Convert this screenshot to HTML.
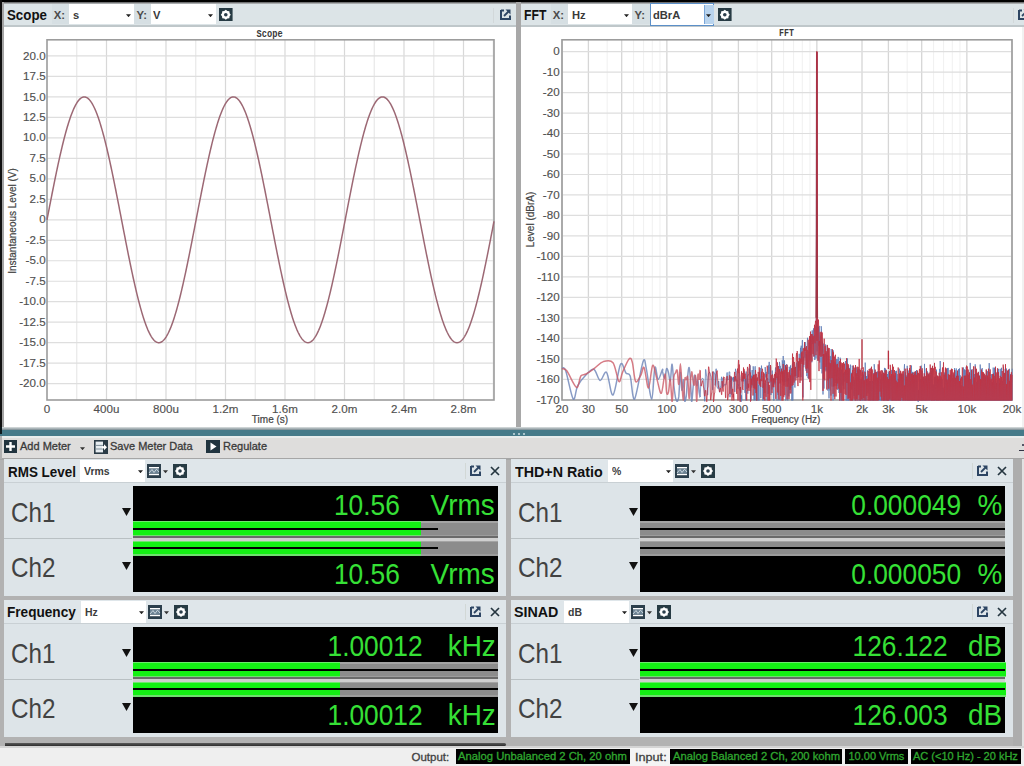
<!DOCTYPE html><html><head><meta charset="utf-8"><style>html,body{margin:0;padding:0;width:1024px;height:766px;overflow:hidden;background:#b2b2b2;position:relative;font-family:"Liberation Sans",sans-serif}</style></head><body><div style="position:absolute;left:0;top:0;width:1024px;height:766px;overflow:hidden">
<div style="position:absolute;left:0px;top:0px;width:1024px;height:2px;background:#000;"></div>
<div style="position:absolute;left:0px;top:0px;width:2px;height:433px;background:#111;"></div>
<div style="position:absolute;left:2px;top:2px;width:2px;height:431px;background:#a4a4a4;"></div>
<div style="position:absolute;left:4px;top:2px;width:512px;height:425px;background:#fff;"></div>
<div style="position:absolute;left:4px;top:2px;width:512px;height:2px;background:linear-gradient(#555,#c4c8ca)"></div>
<div style="position:absolute;left:4px;top:4px;width:512px;height:21px;background:#dce4e7;"></div>
<div style="position:absolute;left:4px;top:25px;width:512px;height:1.5px;background:#bfc7ca;"></div>
<div style="position:absolute;left:7.3px;top:8.3px;font:bold 14px 'Liberation Sans', sans-serif;color:#111;white-space:pre;line-height:1;transform:scaleX(0.95);transform-origin:left top;">Scope</div>
<div style="position:absolute;left:52px;top:4px;width:17px;height:20px;background:#d6dfe3;"></div>
<div style="position:absolute;left:53.8px;top:9.7px;font:bold 11.3px 'Liberation Sans', sans-serif;color:#4a4a4a;white-space:pre;line-height:1;transform:scaleX(1.0);transform-origin:left top;">X:</div>
<div style="position:absolute;left:69px;top:4px;width:65px;height:20px;background:#fff;"></div>
<div style="position:absolute;left:72.6px;top:10.1px;font:bold 11.5px 'Liberation Sans', sans-serif;color:#3a3a3a;white-space:pre;line-height:1;transform:scaleX(0.97);transform-origin:left top;">s</div>
<svg style="position:absolute;left:125.5px;top:13.5px" width="5" height="3.5" viewBox="0 0 5 3.5"><path d="M0 0.3 H5 L2.5 3.2 Z" fill="#222"/></svg>
<div style="position:absolute;left:134px;top:4px;width:16.5px;height:20px;background:#d6dfe3;"></div>
<div style="position:absolute;left:136.6px;top:9.7px;font:bold 11.3px 'Liberation Sans', sans-serif;color:#4a4a4a;white-space:pre;line-height:1;transform:scaleX(1.0);transform-origin:left top;">Y:</div>
<div style="position:absolute;left:150.5px;top:4px;width:65.5px;height:20px;background:#fff;"></div>
<svg style="position:absolute;left:207.5px;top:13.5px" width="5" height="3.5" viewBox="0 0 5 3.5"><path d="M0 0.3 H5 L2.5 3.2 Z" fill="#222"/></svg>
<div style="position:absolute;left:153.3px;top:10.1px;font:bold 11.5px 'Liberation Sans', sans-serif;color:#3a3a3a;white-space:pre;line-height:1;transform:scaleX(0.97);transform-origin:left top;">V</div>
<svg style="position:absolute;left:219px;top:7.8px" width="13.6" height="13.6" viewBox="0 0 13.6 13.6"><rect x="0" y="0" width="13.6" height="13.6" fill="#273b44"/><polygon points="11.80,6.80 10.59,8.37 10.34,10.34 8.37,10.59 6.80,11.80 5.23,10.59 3.26,10.34 3.01,8.37 1.80,6.80 3.01,5.23 3.26,3.26 5.23,3.01 6.80,1.80 8.37,3.01 10.34,3.26 10.59,5.23" fill="#fff"/><circle cx="6.8" cy="6.8" r="1.8" fill="#2c3f4c"/></svg>
<div style="position:absolute;left:493px;top:8px;width:1px;height:15px;background:#d2d8da;"></div>
<svg style="position:absolute;left:500px;top:9px" width="11" height="11" viewBox="0 0 11 11"><path d="M1 1.5 H4 M1 1 V10 H10 V6.5" stroke="#2d4563" stroke-width="2" fill="none"/><path d="M4 7 L8.5 2.5" stroke="#2d4563" stroke-width="1.8"/><path d="M5.5 0.5 H10.5 V5.5 Z" fill="#2d4563"/></svg>
<div style="position:absolute;left:521px;top:2px;width:503px;height:425px;background:#fff;"></div>
<div style="position:absolute;left:521px;top:2px;width:503px;height:2px;background:linear-gradient(#555,#c4c8ca)"></div>
<div style="position:absolute;left:521px;top:4px;width:503px;height:21px;background:#dce4e7;"></div>
<div style="position:absolute;left:521px;top:25px;width:503px;height:1.5px;background:#bfc7ca;"></div>
<div style="position:absolute;left:524.3px;top:8.3px;font:bold 14px 'Liberation Sans', sans-serif;color:#111;white-space:pre;line-height:1;transform:scaleX(0.87);transform-origin:left top;">FFT</div>
<div style="position:absolute;left:551px;top:4px;width:17px;height:20px;background:#d6dfe3;"></div>
<div style="position:absolute;left:552.8px;top:9.7px;font:bold 11.3px 'Liberation Sans', sans-serif;color:#4a4a4a;white-space:pre;line-height:1;transform:scaleX(1.0);transform-origin:left top;">X:</div>
<div style="position:absolute;left:568px;top:4px;width:64px;height:20px;background:#fff;"></div>
<div style="position:absolute;left:571.6px;top:10.1px;font:bold 11.5px 'Liberation Sans', sans-serif;color:#3a3a3a;white-space:pre;line-height:1;transform:scaleX(0.97);transform-origin:left top;">Hz</div>
<svg style="position:absolute;left:623.5px;top:13.5px" width="5" height="3.5" viewBox="0 0 5 3.5"><path d="M0 0.3 H5 L2.5 3.2 Z" fill="#222"/></svg>
<div style="position:absolute;left:632px;top:4px;width:18px;height:20px;background:#d6dfe3;"></div>
<div style="position:absolute;left:634.6px;top:9.7px;font:bold 11.3px 'Liberation Sans', sans-serif;color:#4a4a4a;white-space:pre;line-height:1;transform:scaleX(1.0);transform-origin:left top;">Y:</div>
<div style="position:absolute;left:650px;top:3.2px;width:64.29999999999995px;height:22.6px;background:#fff;box-sizing:border-box;border:1.5px solid #5b8fc8;"></div>
<div style="position:absolute;left:704.0999999999999px;top:4.7px;width:8.7px;height:19.6px;background:#b9d4ee;border-left:1px solid #7aa6d8;"></div>
<svg style="position:absolute;left:706.3px;top:13.5px" width="5" height="3.5" viewBox="0 0 5 3.5"><path d="M0 0.3 H5 L2.5 3.2 Z" fill="#222"/></svg>
<div style="position:absolute;left:652.8px;top:10.1px;font:bold 11.5px 'Liberation Sans', sans-serif;color:#3a3a3a;white-space:pre;line-height:1;transform:scaleX(0.97);transform-origin:left top;">dBrA</div>
<svg style="position:absolute;left:718px;top:7.8px" width="13.6" height="13.6" viewBox="0 0 13.6 13.6"><rect x="0" y="0" width="13.6" height="13.6" fill="#273b44"/><polygon points="11.80,6.80 10.59,8.37 10.34,10.34 8.37,10.59 6.80,11.80 5.23,10.59 3.26,10.34 3.01,8.37 1.80,6.80 3.01,5.23 3.26,3.26 5.23,3.01 6.80,1.80 8.37,3.01 10.34,3.26 10.59,5.23" fill="#fff"/><circle cx="6.8" cy="6.8" r="1.8" fill="#2c3f4c"/></svg>
<div style="position:absolute;left:1012.5px;top:8px;width:1px;height:15px;background:#d2d8da;"></div>
<svg style="position:absolute;left:1018px;top:9px" width="11" height="11" viewBox="0 0 11 11"><path d="M1 1.5 H4 M1 1 V10 H10 V6.5" stroke="#2d4563" stroke-width="2" fill="none"/><path d="M4 7 L8.5 2.5" stroke="#2d4563" stroke-width="1.8"/><path d="M5.5 0.5 H10.5 V5.5 Z" fill="#2d4563"/></svg>
<div style="position:absolute;left:1021.5px;top:26.5px;width:2.5px;height:400.5px;background:#f1f1f1;"></div>
<div style="position:absolute;left:516px;top:2px;width:5px;height:425px;background:#a8a8a8;"></div>
<svg style="position:absolute;left:0;top:0" width="1024" height="766" viewBox="0 0 1024 766">
<line x1="76.75" y1="39.8" x2="76.75" y2="400" stroke="#e8e8e8" stroke-width="1.2"/>
<line x1="106.50" y1="39.8" x2="106.50" y2="400" stroke="#d8d8d8" stroke-width="1.2"/>
<line x1="136.25" y1="39.8" x2="136.25" y2="400" stroke="#e8e8e8" stroke-width="1.2"/>
<line x1="166.00" y1="39.8" x2="166.00" y2="400" stroke="#d8d8d8" stroke-width="1.2"/>
<line x1="195.75" y1="39.8" x2="195.75" y2="400" stroke="#e8e8e8" stroke-width="1.2"/>
<line x1="225.50" y1="39.8" x2="225.50" y2="400" stroke="#d8d8d8" stroke-width="1.2"/>
<line x1="255.25" y1="39.8" x2="255.25" y2="400" stroke="#e8e8e8" stroke-width="1.2"/>
<line x1="285.00" y1="39.8" x2="285.00" y2="400" stroke="#d8d8d8" stroke-width="1.2"/>
<line x1="314.75" y1="39.8" x2="314.75" y2="400" stroke="#e8e8e8" stroke-width="1.2"/>
<line x1="344.50" y1="39.8" x2="344.50" y2="400" stroke="#d8d8d8" stroke-width="1.2"/>
<line x1="374.25" y1="39.8" x2="374.25" y2="400" stroke="#e8e8e8" stroke-width="1.2"/>
<line x1="404.00" y1="39.8" x2="404.00" y2="400" stroke="#d8d8d8" stroke-width="1.2"/>
<line x1="433.75" y1="39.8" x2="433.75" y2="400" stroke="#e8e8e8" stroke-width="1.2"/>
<line x1="463.50" y1="39.8" x2="463.50" y2="400" stroke="#d8d8d8" stroke-width="1.2"/>
<line x1="493.25" y1="39.8" x2="493.25" y2="400" stroke="#e8e8e8" stroke-width="1.2"/>
<line x1="47" y1="55.96" x2="494" y2="55.96" stroke="#dedede" stroke-width="1.2"/>
<line x1="47" y1="76.44" x2="494" y2="76.44" stroke="#dedede" stroke-width="1.2"/>
<line x1="47" y1="96.92" x2="494" y2="96.92" stroke="#dedede" stroke-width="1.2"/>
<line x1="47" y1="117.40" x2="494" y2="117.40" stroke="#dedede" stroke-width="1.2"/>
<line x1="47" y1="137.88" x2="494" y2="137.88" stroke="#dedede" stroke-width="1.2"/>
<line x1="47" y1="158.36" x2="494" y2="158.36" stroke="#dedede" stroke-width="1.2"/>
<line x1="47" y1="178.84" x2="494" y2="178.84" stroke="#dedede" stroke-width="1.2"/>
<line x1="47" y1="199.32" x2="494" y2="199.32" stroke="#dedede" stroke-width="1.2"/>
<line x1="47" y1="219.80" x2="494" y2="219.80" stroke="#dedede" stroke-width="1.2"/>
<line x1="47" y1="240.28" x2="494" y2="240.28" stroke="#dedede" stroke-width="1.2"/>
<line x1="47" y1="260.76" x2="494" y2="260.76" stroke="#dedede" stroke-width="1.2"/>
<line x1="47" y1="281.24" x2="494" y2="281.24" stroke="#dedede" stroke-width="1.2"/>
<line x1="47" y1="301.72" x2="494" y2="301.72" stroke="#dedede" stroke-width="1.2"/>
<line x1="47" y1="322.20" x2="494" y2="322.20" stroke="#dedede" stroke-width="1.2"/>
<line x1="47" y1="342.68" x2="494" y2="342.68" stroke="#dedede" stroke-width="1.2"/>
<line x1="47" y1="363.16" x2="494" y2="363.16" stroke="#dedede" stroke-width="1.2"/>
<line x1="47" y1="383.64" x2="494" y2="383.64" stroke="#dedede" stroke-width="1.2"/>
<rect x="47" y="39.8" width="447" height="360.2" fill="none" stroke="#9c9c9c" stroke-width="1.6"/>
<polyline points="47.00,219.80 47.50,217.23 47.99,214.66 48.49,212.09 48.99,209.52 49.48,206.96 49.98,204.41 50.48,201.86 50.97,199.32 51.47,196.79 51.97,194.27 52.46,191.76 52.96,189.26 53.46,186.78 53.95,184.31 54.45,181.85 54.95,179.41 55.44,176.99 55.94,174.59 56.44,172.21 56.93,169.85 57.43,167.51 57.93,165.20 58.42,162.91 58.92,160.64 59.42,158.40 59.91,156.18 60.41,154.00 60.91,151.84 61.40,149.71 61.90,147.61 62.40,145.55 62.89,143.52 63.39,141.52 63.89,139.55 64.38,137.62 64.88,135.73 65.38,133.87 65.87,132.05 66.37,130.27 66.87,128.53 67.36,126.83 67.86,125.17 68.36,123.55 68.85,121.97 69.35,120.43 69.85,118.94 70.34,117.50 70.84,116.09 71.34,114.74 71.83,113.43 72.33,112.16 72.83,110.94 73.32,109.78 73.82,108.65 74.32,107.58 74.81,106.56 75.31,105.59 75.81,104.66 76.30,103.79 76.80,102.97 77.30,102.20 77.79,101.48 78.29,100.81 78.79,100.19 79.28,99.63 79.78,99.12 80.28,98.66 80.77,98.26 81.27,97.90 81.77,97.61 82.26,97.36 82.76,97.17 83.26,97.03 83.75,96.95 84.25,96.92 84.75,96.94 85.24,97.02 85.74,97.15 86.24,97.34 86.73,97.58 87.23,97.87 87.73,98.22 88.22,98.62 88.72,99.07 89.22,99.57 89.71,100.13 90.21,100.74 90.71,101.41 91.20,102.12 91.70,102.89 92.20,103.70 92.69,104.57 93.19,105.49 93.69,106.46 94.18,107.48 94.68,108.54 95.18,109.66 95.67,110.83 96.17,112.04 96.67,113.30 97.16,114.60 97.66,115.95 98.16,117.35 98.65,118.79 99.15,120.28 99.65,121.81 100.14,123.39 100.64,125.00 101.14,126.66 101.63,128.36 102.13,130.09 102.63,131.87 103.12,133.69 103.62,135.54 104.12,137.43 104.61,139.36 105.11,141.32 105.61,143.31 106.10,145.34 106.60,147.41 107.10,149.50 107.59,151.62 108.09,153.78 108.59,155.96 109.08,158.17 109.58,160.41 110.08,162.68 110.57,164.97 111.07,167.28 111.57,169.62 112.06,171.97 112.56,174.35 113.06,176.75 113.55,179.17 114.05,181.61 114.55,184.06 115.04,186.53 115.54,189.01 116.04,191.51 116.53,194.02 117.03,196.54 117.53,199.07 118.02,201.61 118.52,204.15 119.02,206.71 119.51,209.27 120.01,211.83 120.51,214.40 121.00,216.97 121.50,219.54 122.00,222.11 122.49,224.68 122.99,227.25 123.49,229.82 123.98,232.38 124.48,234.93 124.98,237.48 125.47,240.02 125.97,242.56 126.47,245.08 126.96,247.59 127.46,250.09 127.96,252.57 128.45,255.05 128.95,257.50 129.45,259.94 129.94,262.36 130.44,264.77 130.94,267.15 131.43,269.51 131.93,271.85 132.43,274.17 132.92,276.47 133.42,278.73 133.92,280.98 134.41,283.20 134.91,285.38 135.41,287.54 135.90,289.68 136.40,291.78 136.90,293.84 137.39,295.88 137.89,297.88 138.39,299.85 138.88,301.79 139.38,303.68 139.88,305.54 140.37,307.37 140.87,309.15 141.37,310.90 141.86,312.60 142.36,314.27 142.86,315.89 143.35,317.47 143.85,319.01 144.35,320.51 144.84,321.96 145.34,323.37 145.84,324.73 146.33,326.04 146.83,327.31 147.33,328.53 147.82,329.71 148.32,330.83 148.82,331.91 149.31,332.94 149.81,333.92 150.31,334.85 150.80,335.73 151.30,336.55 151.80,337.33 152.29,338.05 152.79,338.73 153.29,339.35 153.78,339.92 154.28,340.43 154.78,340.90 155.27,341.31 155.77,341.66 156.27,341.97 156.76,342.22 157.26,342.41 157.76,342.56 158.25,342.64 158.75,342.68 159.25,342.66 159.74,342.59 160.24,342.46 160.74,342.28 161.23,342.05 161.73,341.76 162.23,341.42 162.72,341.03 163.22,340.58 163.72,340.08 164.21,339.53 164.71,338.92 165.21,338.26 165.70,337.55 166.20,336.79 166.70,335.98 167.19,335.12 167.69,334.20 168.19,333.24 168.68,332.23 169.18,331.17 169.68,330.05 170.17,328.89 170.67,327.69 171.17,326.43 171.66,325.13 172.16,323.78 172.66,322.39 173.15,320.95 173.65,319.47 174.15,317.94 174.64,316.38 175.14,314.76 175.64,313.11 176.13,311.42 176.63,309.68 177.13,307.91 177.62,306.10 178.12,304.25 178.62,302.36 179.11,300.44 179.61,298.48 180.11,296.49 180.60,294.46 181.10,292.40 181.60,290.31 182.09,288.19 182.59,286.04 183.09,283.86 183.58,281.65 184.08,279.41 184.58,277.15 185.07,274.87 185.57,272.56 186.07,270.22 186.56,267.86 187.06,265.49 187.56,263.09 188.05,260.67 188.55,258.24 189.05,255.79 189.54,253.32 190.04,250.84 190.54,248.35 191.03,245.84 191.53,243.32 192.03,240.79 192.52,238.25 193.02,235.70 193.52,233.15 194.01,230.59 194.51,228.03 195.01,225.46 195.50,222.89 196.00,220.32 196.50,217.75 196.99,215.18 197.49,212.61 197.99,210.04 198.48,207.48 198.98,204.92 199.48,202.37 199.97,199.83 200.47,197.30 200.97,194.78 201.46,192.26 201.96,189.76 202.46,187.28 202.95,184.80 203.45,182.35 203.95,179.90 204.44,177.48 204.94,175.08 205.44,172.69 205.93,170.33 206.43,167.98 206.93,165.66 207.42,163.36 207.92,161.09 208.42,158.85 208.91,156.63 209.41,154.43 209.91,152.27 210.40,150.14 210.90,148.03 211.40,145.96 211.89,143.92 212.39,141.92 212.89,139.94 213.38,138.01 213.88,136.11 214.38,134.24 214.87,132.41 215.37,130.63 215.87,128.88 216.36,127.17 216.86,125.50 217.36,123.87 217.85,122.28 218.35,120.74 218.85,119.24 219.34,117.78 219.84,116.37 220.34,115.01 220.83,113.69 221.33,112.41 221.83,111.19 222.32,110.01 222.82,108.88 223.32,107.79 223.81,106.76 224.31,105.78 224.81,104.84 225.30,103.96 225.80,103.13 226.30,102.35 226.79,101.62 227.29,100.94 227.79,100.31 228.28,99.74 228.78,99.22 229.28,98.75 229.77,98.33 230.27,97.97 230.77,97.66 231.26,97.41 231.76,97.20 232.26,97.06 232.75,96.96 233.25,96.92 233.75,96.94 234.24,97.00 234.74,97.12 235.24,97.30 235.73,97.53 236.23,97.81 236.73,98.14 237.22,98.53 237.72,98.97 238.22,99.47 238.71,100.02 239.21,100.62 239.71,101.27 240.20,101.97 240.70,102.73 241.20,103.53 241.69,104.39 242.19,105.30 242.69,106.26 243.18,107.27 243.68,108.33 244.18,109.43 244.67,110.59 245.17,111.79 245.67,113.04 246.16,114.34 246.66,115.68 247.16,117.07 247.65,118.50 248.15,119.98 248.65,121.50 249.14,123.06 249.64,124.67 250.14,126.32 250.63,128.01 251.13,129.74 251.63,131.51 252.12,133.32 252.62,135.16 253.12,137.05 253.61,138.97 254.11,140.92 254.61,142.91 255.10,144.93 255.60,146.99 256.10,149.08 256.59,151.19 257.09,153.34 257.59,155.52 258.08,157.73 258.58,159.96 259.08,162.22 259.57,164.50 260.07,166.81 260.57,169.14 261.06,171.50 261.56,173.87 262.06,176.27 262.55,178.68 263.05,181.11 263.55,183.56 264.04,186.03 264.54,188.51 265.04,191.00 265.53,193.51 266.03,196.03 266.53,198.56 267.02,201.09 267.52,203.64 268.02,206.19 268.51,208.75 269.01,211.31 269.51,213.88 270.00,216.45 270.50,219.02 271.00,221.60 271.49,224.17 271.99,226.74 272.49,229.30 272.98,231.86 273.48,234.42 273.98,236.97 274.47,239.51 274.97,242.05 275.47,244.57 275.96,247.08 276.46,249.59 276.96,252.07 277.45,254.55 277.95,257.01 278.45,259.45 278.94,261.88 279.44,264.28 279.94,266.67 280.43,269.04 280.93,271.38 281.43,273.71 281.92,276.01 282.42,278.28 282.92,280.53 283.41,282.75 283.91,284.95 284.41,287.11 284.90,289.25 285.40,291.36 285.90,293.43 286.39,295.47 286.89,297.48 287.39,299.46 287.88,301.40 288.38,303.30 288.88,305.17 289.37,307.00 289.87,308.80 290.37,310.55 290.86,312.26 291.36,313.94 291.86,315.57 292.35,317.16 292.85,318.71 293.35,320.21 293.84,321.67 294.34,323.09 294.84,324.46 295.33,325.78 295.83,327.06 296.33,328.29 296.82,329.48 297.32,330.61 297.82,331.70 298.31,332.74 298.81,333.73 299.31,334.66 299.80,335.55 300.30,336.39 300.80,337.18 301.29,337.91 301.79,338.60 302.29,339.23 302.78,339.81 303.28,340.33 303.78,340.81 304.27,341.23 304.77,341.60 305.27,341.91 305.76,342.17 306.26,342.38 306.76,342.53 307.25,342.63 307.75,342.68 308.25,342.67 308.74,342.61 309.24,342.49 309.74,342.32 310.23,342.10 310.73,341.82 311.23,341.49 311.72,341.11 312.22,340.67 312.72,340.18 313.21,339.64 313.71,339.05 314.21,338.40 314.70,337.70 315.20,336.95 315.70,336.15 316.19,335.30 316.69,334.39 317.19,333.44 317.68,332.44 318.18,331.38 318.68,330.28 319.17,329.13 319.67,327.93 320.17,326.69 320.66,325.40 321.16,324.06 321.66,322.67 322.15,321.25 322.65,319.77 323.15,318.25 323.64,316.69 324.14,315.09 324.64,313.45 325.13,311.76 325.63,310.04 326.13,308.27 326.62,306.47 327.12,304.62 327.62,302.74 328.11,300.83 328.61,298.88 329.11,296.89 329.60,294.87 330.10,292.82 330.60,290.74 331.09,288.62 331.59,286.48 332.09,284.30 332.58,282.10 333.08,279.87 333.58,277.61 334.07,275.33 334.57,273.02 335.07,270.69 335.56,268.34 336.06,265.97 336.56,263.57 337.05,261.16 337.55,258.73 338.05,256.28 338.54,253.82 339.04,251.34 339.54,248.85 340.03,246.34 340.53,243.83 341.03,241.30 341.52,238.76 342.02,236.22 342.52,233.67 343.01,231.11 343.51,228.54 344.01,225.98 344.50,223.41 345.00,220.84 345.50,218.26 345.99,215.69 346.49,213.12 346.99,210.56 347.48,207.99 347.98,205.44 348.48,202.89 348.97,200.34 349.47,197.81 349.97,195.28 350.46,192.77 350.96,190.27 351.46,187.78 351.95,185.30 352.45,182.84 352.95,180.39 353.44,177.97 353.94,175.56 354.44,173.17 354.93,170.80 355.43,168.45 355.93,166.13 356.42,163.83 356.92,161.55 357.42,159.30 357.91,157.07 358.41,154.87 358.91,152.70 359.40,150.56 359.90,148.46 360.40,146.38 360.89,144.33 361.39,142.32 361.89,140.34 362.38,138.40 362.88,136.49 363.38,134.61 363.87,132.78 364.37,130.98 364.87,129.23 365.36,127.51 365.86,125.83 366.36,124.19 366.85,122.60 367.35,121.05 367.85,119.54 368.34,118.07 368.84,116.65 369.34,115.28 369.83,113.95 370.33,112.67 370.83,111.43 371.32,110.24 371.82,109.10 372.32,108.01 372.81,106.97 373.31,105.97 373.81,105.03 374.30,104.13 374.80,103.29 375.30,102.50 375.79,101.76 376.29,101.07 376.79,100.43 377.28,99.85 377.78,99.32 378.28,98.84 378.77,98.41 379.27,98.04 379.77,97.72 380.26,97.45 380.76,97.24 381.26,97.08 381.75,96.98 382.25,96.93 382.75,96.93 383.24,96.98 383.74,97.09 384.24,97.26 384.73,97.48 385.23,97.75 385.73,98.07 386.22,98.45 386.72,98.88 387.22,99.36 387.71,99.90 388.21,100.49 388.71,101.13 389.20,101.83 389.70,102.57 390.20,103.37 390.69,104.22 391.19,105.11 391.69,106.06 392.18,107.06 392.68,108.11 393.18,109.21 393.67,110.35 394.17,111.54 394.67,112.78 395.16,114.07 395.66,115.40 396.16,116.78 396.65,118.21 397.15,119.68 397.65,121.19 398.14,122.75 398.64,124.35 399.14,125.99 399.63,127.67 400.13,129.39 400.63,131.15 401.12,132.95 401.62,134.79 402.12,136.66 402.61,138.58 403.11,140.52 403.61,142.51 404.10,144.52 404.60,146.57 405.10,148.65 405.59,150.76 406.09,152.91 406.59,155.08 407.08,157.28 407.58,159.51 408.08,161.76 408.57,164.04 409.07,166.34 409.57,168.67 410.06,171.02 410.56,173.39 411.06,175.78 411.55,178.19 412.05,180.62 412.55,183.07 413.04,185.53 413.54,188.01 414.04,190.50 414.53,193.00 415.03,195.52 415.53,198.05 416.02,200.58 416.52,203.13 417.02,205.68 417.51,208.24 418.01,210.80 418.51,213.36 419.00,215.93 419.50,218.51 420.00,221.08 420.49,223.65 420.99,226.22 421.49,228.78 421.98,231.35 422.48,233.91 422.98,236.46 423.47,239.00 423.97,241.54 424.47,244.06 424.96,246.58 425.46,249.08 425.96,251.57 426.45,254.05 426.95,256.51 427.45,258.96 427.94,261.39 428.44,263.80 428.94,266.19 429.43,268.56 429.93,270.91 430.43,273.24 430.92,275.54 431.42,277.82 431.92,280.08 432.41,282.31 432.91,284.51 433.41,286.68 433.90,288.82 434.40,290.93 434.90,293.01 435.39,295.06 435.89,297.08 436.39,299.06 436.88,301.01 437.38,302.92 437.88,304.80 438.37,306.64 438.87,308.44 439.37,310.20 439.86,311.92 440.36,313.60 440.86,315.24 441.35,316.84 441.85,318.40 442.35,319.91 442.84,321.38 443.34,322.81 443.84,324.19 444.33,325.52 444.83,326.81 445.33,328.05 445.82,329.24 446.32,330.39 446.82,331.48 447.31,332.53 447.81,333.53 448.31,334.48 448.80,335.38 449.30,336.23 449.80,337.02 450.29,337.77 450.79,338.46 451.29,339.10 451.78,339.69 452.28,340.23 452.78,340.72 453.27,341.15 453.77,341.53 454.27,341.85 454.76,342.12 455.26,342.34 455.76,342.50 456.25,342.62 456.75,342.67 457.25,342.67 457.74,342.62 458.24,342.52 458.74,342.36 459.23,342.15 459.73,341.88 460.23,341.56 460.72,341.19 461.22,340.76 461.72,340.29 462.21,339.75 462.71,339.17 463.21,338.53 463.70,337.85 464.20,337.11 464.70,336.31 465.19,335.47 465.69,334.58 466.19,333.64 466.68,332.64 467.18,331.60 467.68,330.51 468.17,329.37 468.67,328.18 469.17,326.94 469.66,325.66 470.16,324.33 470.66,322.96 471.15,321.54 471.65,320.07 472.15,318.56 472.64,317.01 473.14,315.42 473.64,313.78 474.13,312.10 474.63,310.39 475.13,308.63 475.62,306.83 476.12,305.00 476.62,303.13 477.11,301.22 477.61,299.27 478.11,297.30 478.60,295.28 479.10,293.24 479.60,291.16 480.09,289.05 480.59,286.91 481.09,284.74 481.58,282.54 482.08,280.32 482.58,278.07 483.07,275.79 483.57,273.49 484.07,271.16 484.56,268.82 485.06,266.45 485.56,264.06 486.05,261.65 486.55,259.22 487.05,256.78 487.54,254.32 488.04,251.84 488.54,249.35 489.03,246.85 489.53,244.33 490.03,241.81 490.52,239.27 491.02,236.73 491.52,234.18 492.01,231.62 492.51,229.06 493.01,226.49 493.50,223.92 494.00,221.35" fill="none" stroke="#9c6874" stroke-width="1.5"/>
<text x="45.6" y="59.56" text-anchor="end" font-family="Liberation Sans" font-size="11.6" fill="#505050" stroke="#505050" stroke-width="0.15">20.0</text>
<text x="45.6" y="80.04" text-anchor="end" font-family="Liberation Sans" font-size="11.6" fill="#505050" stroke="#505050" stroke-width="0.15">17.5</text>
<text x="45.6" y="100.52" text-anchor="end" font-family="Liberation Sans" font-size="11.6" fill="#505050" stroke="#505050" stroke-width="0.15">15.0</text>
<text x="45.6" y="121.00" text-anchor="end" font-family="Liberation Sans" font-size="11.6" fill="#505050" stroke="#505050" stroke-width="0.15">12.5</text>
<text x="45.6" y="141.48" text-anchor="end" font-family="Liberation Sans" font-size="11.6" fill="#505050" stroke="#505050" stroke-width="0.15">10.0</text>
<text x="45.6" y="161.96" text-anchor="end" font-family="Liberation Sans" font-size="11.6" fill="#505050" stroke="#505050" stroke-width="0.15">7.5</text>
<text x="45.6" y="182.44" text-anchor="end" font-family="Liberation Sans" font-size="11.6" fill="#505050" stroke="#505050" stroke-width="0.15">5.0</text>
<text x="45.6" y="202.92" text-anchor="end" font-family="Liberation Sans" font-size="11.6" fill="#505050" stroke="#505050" stroke-width="0.15">2.5</text>
<text x="45.6" y="223.40" text-anchor="end" font-family="Liberation Sans" font-size="11.6" fill="#505050" stroke="#505050" stroke-width="0.15">0</text>
<text x="45.6" y="243.88" text-anchor="end" font-family="Liberation Sans" font-size="11.6" fill="#505050" stroke="#505050" stroke-width="0.15">-2.5</text>
<text x="45.6" y="264.36" text-anchor="end" font-family="Liberation Sans" font-size="11.6" fill="#505050" stroke="#505050" stroke-width="0.15">-5.0</text>
<text x="45.6" y="284.84" text-anchor="end" font-family="Liberation Sans" font-size="11.6" fill="#505050" stroke="#505050" stroke-width="0.15">-7.5</text>
<text x="45.6" y="305.32" text-anchor="end" font-family="Liberation Sans" font-size="11.6" fill="#505050" stroke="#505050" stroke-width="0.15">-10.0</text>
<text x="45.6" y="325.80" text-anchor="end" font-family="Liberation Sans" font-size="11.6" fill="#505050" stroke="#505050" stroke-width="0.15">-12.5</text>
<text x="45.6" y="346.28" text-anchor="end" font-family="Liberation Sans" font-size="11.6" fill="#505050" stroke="#505050" stroke-width="0.15">-15.0</text>
<text x="45.6" y="366.76" text-anchor="end" font-family="Liberation Sans" font-size="11.6" fill="#505050" stroke="#505050" stroke-width="0.15">-17.5</text>
<text x="45.6" y="387.24" text-anchor="end" font-family="Liberation Sans" font-size="11.6" fill="#505050" stroke="#505050" stroke-width="0.15">-20.0</text>
<text x="47.00" y="413" text-anchor="middle" font-family="Liberation Sans" font-size="11.6" fill="#505050" stroke="#505050" stroke-width="0.15">0</text>
<text x="106.50" y="413" text-anchor="middle" font-family="Liberation Sans" font-size="11.6" fill="#505050" stroke="#505050" stroke-width="0.15">400u</text>
<text x="166.00" y="413" text-anchor="middle" font-family="Liberation Sans" font-size="11.6" fill="#505050" stroke="#505050" stroke-width="0.15">800u</text>
<text x="225.50" y="413" text-anchor="middle" font-family="Liberation Sans" font-size="11.6" fill="#505050" stroke="#505050" stroke-width="0.15">1.2m</text>
<text x="285.00" y="413" text-anchor="middle" font-family="Liberation Sans" font-size="11.6" fill="#505050" stroke="#505050" stroke-width="0.15">1.6m</text>
<text x="344.50" y="413" text-anchor="middle" font-family="Liberation Sans" font-size="11.6" fill="#505050" stroke="#505050" stroke-width="0.15">2.0m</text>
<text x="404.00" y="413" text-anchor="middle" font-family="Liberation Sans" font-size="11.6" fill="#505050" stroke="#505050" stroke-width="0.15">2.4m</text>
<text x="463.50" y="413" text-anchor="middle" font-family="Liberation Sans" font-size="11.6" fill="#505050" stroke="#505050" stroke-width="0.15">2.8m</text>
<text x="270" y="423" text-anchor="middle" font-family="Liberation Sans" font-size="10" fill="#444" stroke="#444" stroke-width="0.2">Time (s)</text>
<text transform="translate(16,221) rotate(-90)" text-anchor="middle" font-family="Liberation Sans" font-size="10" fill="#444" stroke="#444" stroke-width="0.2">Instantaneous Level (V)</text>
<text x="256.6" y="36.6" textLength="26" lengthAdjust="spacingAndGlyphs" font-family="Liberation Mono" font-weight="bold" font-size="10.5" fill="#3a3a3a">Scope</text>
<line x1="562.00" y1="39.8" x2="562.00" y2="400" stroke="#d6d6d6" stroke-width="1.3"/>
<line x1="588.41" y1="39.8" x2="588.41" y2="400" stroke="#d6d6d6" stroke-width="1.3"/>
<line x1="607.15" y1="39.8" x2="607.15" y2="400" stroke="#f0f0f0" stroke-width="1"/>
<line x1="621.69" y1="39.8" x2="621.69" y2="400" stroke="#d6d6d6" stroke-width="1.3"/>
<line x1="633.57" y1="39.8" x2="633.57" y2="400" stroke="#f0f0f0" stroke-width="1"/>
<line x1="643.61" y1="39.8" x2="643.61" y2="400" stroke="#f0f0f0" stroke-width="1"/>
<line x1="652.31" y1="39.8" x2="652.31" y2="400" stroke="#f0f0f0" stroke-width="1"/>
<line x1="659.98" y1="39.8" x2="659.98" y2="400" stroke="#f0f0f0" stroke-width="1"/>
<line x1="666.85" y1="39.8" x2="666.85" y2="400" stroke="#d6d6d6" stroke-width="1.3"/>
<line x1="712.00" y1="39.8" x2="712.00" y2="400" stroke="#d6d6d6" stroke-width="1.3"/>
<line x1="738.41" y1="39.8" x2="738.41" y2="400" stroke="#d6d6d6" stroke-width="1.3"/>
<line x1="757.15" y1="39.8" x2="757.15" y2="400" stroke="#f0f0f0" stroke-width="1"/>
<line x1="771.69" y1="39.8" x2="771.69" y2="400" stroke="#d6d6d6" stroke-width="1.3"/>
<line x1="783.57" y1="39.8" x2="783.57" y2="400" stroke="#f0f0f0" stroke-width="1"/>
<line x1="793.61" y1="39.8" x2="793.61" y2="400" stroke="#f0f0f0" stroke-width="1"/>
<line x1="802.31" y1="39.8" x2="802.31" y2="400" stroke="#f0f0f0" stroke-width="1"/>
<line x1="809.98" y1="39.8" x2="809.98" y2="400" stroke="#f0f0f0" stroke-width="1"/>
<line x1="816.85" y1="39.8" x2="816.85" y2="400" stroke="#d6d6d6" stroke-width="1.3"/>
<line x1="862.00" y1="39.8" x2="862.00" y2="400" stroke="#d6d6d6" stroke-width="1.3"/>
<line x1="888.41" y1="39.8" x2="888.41" y2="400" stroke="#d6d6d6" stroke-width="1.3"/>
<line x1="907.15" y1="39.8" x2="907.15" y2="400" stroke="#f0f0f0" stroke-width="1"/>
<line x1="921.69" y1="39.8" x2="921.69" y2="400" stroke="#d6d6d6" stroke-width="1.3"/>
<line x1="933.57" y1="39.8" x2="933.57" y2="400" stroke="#f0f0f0" stroke-width="1"/>
<line x1="943.61" y1="39.8" x2="943.61" y2="400" stroke="#f0f0f0" stroke-width="1"/>
<line x1="952.31" y1="39.8" x2="952.31" y2="400" stroke="#f0f0f0" stroke-width="1"/>
<line x1="959.98" y1="39.8" x2="959.98" y2="400" stroke="#f0f0f0" stroke-width="1"/>
<line x1="966.85" y1="39.8" x2="966.85" y2="400" stroke="#d6d6d6" stroke-width="1.3"/>
<line x1="1012.00" y1="39.8" x2="1012.00" y2="400" stroke="#d6d6d6" stroke-width="1.3"/>
<line x1="562" y1="51.60" x2="1012" y2="51.60" stroke="#dedede" stroke-width="1.2"/>
<line x1="562" y1="72.08" x2="1012" y2="72.08" stroke="#dedede" stroke-width="1.2"/>
<line x1="562" y1="92.56" x2="1012" y2="92.56" stroke="#dedede" stroke-width="1.2"/>
<line x1="562" y1="113.04" x2="1012" y2="113.04" stroke="#dedede" stroke-width="1.2"/>
<line x1="562" y1="133.52" x2="1012" y2="133.52" stroke="#dedede" stroke-width="1.2"/>
<line x1="562" y1="154.00" x2="1012" y2="154.00" stroke="#dedede" stroke-width="1.2"/>
<line x1="562" y1="174.48" x2="1012" y2="174.48" stroke="#dedede" stroke-width="1.2"/>
<line x1="562" y1="194.96" x2="1012" y2="194.96" stroke="#dedede" stroke-width="1.2"/>
<line x1="562" y1="215.44" x2="1012" y2="215.44" stroke="#dedede" stroke-width="1.2"/>
<line x1="562" y1="235.92" x2="1012" y2="235.92" stroke="#dedede" stroke-width="1.2"/>
<line x1="562" y1="256.40" x2="1012" y2="256.40" stroke="#dedede" stroke-width="1.2"/>
<line x1="562" y1="276.88" x2="1012" y2="276.88" stroke="#dedede" stroke-width="1.2"/>
<line x1="562" y1="297.36" x2="1012" y2="297.36" stroke="#dedede" stroke-width="1.2"/>
<line x1="562" y1="317.84" x2="1012" y2="317.84" stroke="#dedede" stroke-width="1.2"/>
<line x1="562" y1="338.32" x2="1012" y2="338.32" stroke="#dedede" stroke-width="1.2"/>
<line x1="562" y1="358.80" x2="1012" y2="358.80" stroke="#dedede" stroke-width="1.2"/>
<line x1="562" y1="379.28" x2="1012" y2="379.28" stroke="#dedede" stroke-width="1.2"/>
<rect x="562" y="39.8" width="450" height="360.2" fill="none" stroke="#9c9c9c" stroke-width="1.6"/>
<clipPath id="lowc"><rect x="560" y="300" width="140" height="102"/></clipPath><clipPath id="highc"><rect x="700" y="30" width="320" height="372"/></clipPath>
<path d="M562.0,368.0 C562.6,368.5 563.8,365.6 565.7,370.8 C567.6,376.0 571.3,396.7 573.3,399.2 C575.3,400.5 575.6,389.7 577.6,385.8 C579.6,381.9 582.3,378.8 585.0,376.0 C587.7,373.2 591.2,368.5 593.7,369.2 C596.2,369.9 598.0,379.9 600.1,380.4 C602.2,380.9 604.5,370.0 606.6,372.4 C608.8,374.8 610.7,396.4 613.0,395.0 C615.3,393.6 618.4,368.0 620.5,364.3 C622.6,360.6 624.3,371.0 625.9,373.0 C627.5,375.0 628.8,371.7 630.2,376.1 C631.6,380.5 632.4,400.5 634.5,399.2 C636.6,396.8 641.1,366.7 643.1,361.6 C645.1,356.5 644.9,362.3 646.3,368.6 C647.7,374.9 650.3,399.4 651.7,399.2 C653.1,399.0 653.8,370.9 654.9,367.6 C656.0,364.3 656.9,379.0 658.1,379.4 C659.4,379.8 661.6,370.9 662.4,369.7 C663.2,368.5 662.3,370.6 662.6,372.0 C663.0,373.4 664.0,378.7 664.7,378.1 C665.3,377.5 666.0,369.5 666.6,368.6 C667.2,367.7 667.9,370.6 668.5,372.7 C669.1,374.7 669.7,382.2 670.3,380.8 C670.9,379.4 671.5,363.6 672.1,364.2 C672.7,364.9 673.3,379.2 673.8,384.8 C674.4,390.3 675.0,394.8 675.5,397.6 C676.1,400.5 676.6,400.5 677.2,401.8 C677.7,400.5 678.3,400.5 678.8,396.7 C679.3,391.8 679.8,373.5 680.4,372.5 C680.9,371.4 681.4,389.1 681.9,390.3 C682.4,391.5 682.9,378.0 683.4,379.9 C683.9,381.8 684.4,399.2 684.9,401.8 C685.3,400.5 685.8,400.1 686.3,395.8 C686.8,391.5 687.2,380.7 687.7,376.0 C688.2,371.3 688.6,367.0 689.1,367.6 C689.5,368.1 690.0,373.5 690.4,379.2 C690.8,384.9 691.3,400.3 691.7,401.8 C692.2,400.5 692.6,392.7 693.0,388.4 C693.4,384.1 693.9,377.9 694.3,376.0 C694.7,374.1 695.1,375.6 695.5,377.2 C695.9,378.8 696.3,385.1 696.7,385.6 C697.1,386.1 697.5,379.4 697.9,380.4 C698.3,381.4 698.9,390.0 699.1,391.9 L700.0,397.0 L700.2,397.0 L701.0,379.6 L701.2,379.6 L702.5,378.2 L702.8,378.2 L703.5,380.0 L703.8,380.0 L704.5,400.5 L704.8,401.4 L705.5,369.5 L705.8,369.5 L706.5,375.8 L706.8,375.8 L707.5,395.1 L707.8,395.1 L708.5,373.3 L708.8,373.3 L709.5,372.3 L709.8,372.3 L710.5,375.5 L710.8,375.5 L711.5,379.7 L711.8,379.7 L712.5,389.8 L712.8,389.8 L713.5,371.6 L713.8,371.6 L714.5,374.0 L714.8,374.0 L715.0,385.4 L715.2,385.4 L716.0,368.8 L716.2,368.8 L717.0,387.2 L717.2,387.2 L718.0,388.7 L718.2,388.7 L718.5,381.0 L718.8,381.0 L719.5,392.1 L719.8,392.1 L720.5,386.4 L720.8,386.4 L721.5,376.9 L721.8,376.9 L722.0,388.2 L722.2,388.2 L723.0,378.0 L723.2,378.0 L723.5,386.4 L723.8,386.4 L724.5,384.3 L724.8,384.3 L725.5,384.9 L725.8,384.9 L726.0,383.6 L726.2,383.6 L727.0,372.5 L727.2,372.5 L727.5,380.1 L727.8,380.1 L728.5,379.7 L728.8,379.7 L729.0,371.8 L729.2,371.8 L729.5,371.9 L729.8,371.9 L730.0,397.2 L730.2,380.6 L730.5,376.4 L730.8,376.4 L731.0,388.6 L731.2,377.5 L731.5,394.5 L731.8,394.5 L732.0,388.1 L732.2,380.0 L732.5,377.7 L732.8,377.7 L733.0,380.5 L733.2,380.5 L733.5,376.9 L733.8,381.8 L734.0,377.2 L734.2,377.2 L734.5,382.7 L734.8,391.9 L735.0,377.6 L735.2,377.6 L735.5,368.8 L735.8,370.7 L736.0,371.1 L736.2,371.1 L736.5,380.3 L736.8,381.4 L737.0,380.3 L737.2,380.3 L737.5,383.8 L737.8,385.4 L738.0,388.8 L738.2,384.5 L738.5,385.5 L738.8,385.5 L739.0,377.1 L739.2,372.7 L739.5,374.7 L739.8,374.7 L740.0,400.5 L740.2,387.2 L740.5,393.2 L740.8,400.5 L741.0,400.5 L741.2,401.8 L741.5,395.3 L741.8,400.5 L742.0,385.1 L742.2,376.6 L742.5,376.8 L742.8,376.8 L743.0,381.2 L743.2,381.0 L743.5,371.3 L743.8,381.4 L744.0,371.2 L744.2,371.2 L744.5,379.6 L744.8,392.4 L745.0,393.0 L745.2,392.7 L745.5,379.4 L745.8,400.5 L746.0,371.6 L746.2,371.6 L746.5,377.6 L746.8,388.9 L747.0,380.0 L747.2,378.8 L747.5,375.4 L747.8,393.7 L748.0,377.3 L748.2,374.1 L748.5,375.2 L748.8,375.2 L749.0,370.2 L749.2,368.4 L749.5,372.9 L749.8,373.5 L750.0,367.4 L750.2,365.4 L750.5,373.1 L750.8,396.9 L751.0,400.5 L751.2,395.4 L751.5,375.7 L751.8,387.6 L752.0,371.0 L752.2,370.0 L752.5,379.4 L752.8,385.5 L753.0,369.6 L753.2,366.3 L753.5,369.0 L753.8,375.0 L754.0,400.5 L754.2,387.3 L754.5,378.1 L754.8,400.1 L755.0,367.1 L755.2,366.3 L755.5,377.7 L755.8,393.7 L756.0,400.5 L756.2,380.7 L756.5,383.7 L756.8,400.5 L757.0,392.8 L757.2,379.6 L757.5,377.5 L757.8,391.3 L758.0,400.5 L758.2,396.8 L758.5,384.5 L758.8,385.3 L759.0,400.5 L759.2,386.0 L759.5,372.5 L759.8,381.6 L760.0,370.6 L760.2,368.1 L760.5,381.6 L760.8,398.2 L761.0,380.1 L761.2,369.3 L761.5,365.6 L761.8,371.1 L762.0,376.3 L762.2,376.0 L762.5,382.4 L762.8,400.5 L763.0,390.0 L763.2,381.8 L763.5,379.8 L763.8,398.0 L764.0,400.5 L764.2,383.1 L764.5,390.1 L764.8,393.0 L765.0,382.5 L765.2,367.1 L765.5,371.5 L765.8,377.4 L766.0,377.1 L766.2,371.8 L766.5,378.2 L766.8,383.5 L767.0,400.5 L767.2,383.8 L767.5,378.0 L767.8,379.1 L768.0,393.9 L768.2,388.0 L768.5,365.4 L768.8,374.1 L769.0,364.0 L769.2,361.9 L769.5,366.6 L769.8,383.0 L770.0,378.5 L770.2,366.5 L770.5,372.7 L770.8,380.2 L771.0,395.0 L771.2,382.1 L771.5,378.3 L771.8,388.0 L772.0,389.6 L772.2,370.5 L772.5,378.1 L772.8,381.5 L773.0,387.4 L773.2,378.2 L773.5,398.3 L773.8,400.5 L774.0,400.5 L774.2,380.2 L774.5,378.4 L774.8,384.4 L775.0,374.0 L775.2,373.5 L775.5,367.5 L775.8,379.8 L776.0,375.5 L776.2,373.6 L776.5,372.9 L776.8,374.3 L777.0,400.5 L777.2,380.3 L777.5,376.6 L777.8,381.7 L778.0,394.9 L778.2,380.6 L778.5,366.0 L778.8,384.2 L779.0,400.5 L779.2,370.4 L779.5,361.9 L779.8,364.4 L780.0,371.2 L780.2,365.9 L780.5,377.3 L780.8,400.5 L781.0,378.0 L781.2,372.3 L781.5,368.5 L781.8,373.5 L782.0,373.8 L782.2,360.3 L782.5,362.0 L782.8,381.5 L783.0,378.8 L783.2,356.0 L783.5,367.1 L783.8,372.2 L784.0,385.6 L784.2,371.6 L784.5,360.4 L784.8,368.1 L785.0,381.9 L785.2,373.6 L785.5,365.4 L785.8,400.5 L786.0,397.0 L786.2,374.2 L786.5,364.2 L786.8,368.4 L787.0,381.4 L787.2,373.6 L787.5,396.2 L787.8,400.5 L788.0,398.7 L788.2,389.2 L788.5,377.8 L788.8,396.4 L789.0,374.1 L789.2,366.8 L789.5,368.7 L789.8,393.3 L790.0,388.6 L790.2,380.7 L790.5,365.4 L790.8,388.0 L791.0,376.8 L791.2,373.5 L791.5,383.2 L791.8,400.5 L792.0,393.8 L792.2,366.1 L792.5,363.4 L792.8,400.5 L793.0,377.1 L793.2,366.1 L793.5,360.9 L793.8,366.0 L794.0,380.6 L794.2,367.6 L794.5,367.8 L794.8,387.2 L795.0,387.6 L795.2,368.5 L795.5,367.4 L795.8,371.7 L796.0,376.1 L796.2,366.4 L796.5,362.5 L796.8,368.2 L797.0,378.0 L797.2,363.4 L797.5,360.9 L797.8,377.3 L798.0,365.4 L798.2,363.2 L798.5,364.6 L798.8,367.8 L799.0,360.3 L799.2,353.8 L799.5,359.6 L799.8,367.5 L800.0,370.5 L800.2,361.3 L800.5,347.8 L800.8,371.2 L801.0,377.2 L801.2,345.7 L801.5,356.3 L801.8,361.8 L802.0,357.1 L802.2,340.8 L802.5,340.0 L802.8,363.0 L803.0,397.5 L803.2,363.5 L803.5,356.8 L803.8,367.3 L804.0,359.4 L804.2,354.0 L804.5,344.5 L804.8,356.9 L805.0,357.8 L805.2,342.0 L805.5,347.0 L805.8,352.2 L806.0,370.8 L806.2,353.9 L806.5,356.2 L806.8,376.1 L807.0,367.3 L807.2,343.9 L807.5,337.8 L807.8,342.8 L808.0,378.2 L808.2,351.3 L808.5,353.0 L808.8,378.6 L809.0,357.9 L809.2,342.4 L809.5,346.0 L809.8,360.4 L810.0,353.1 L810.2,337.1 L810.5,337.1 L810.8,355.2 L811.0,340.7 L811.2,334.3 L811.5,341.1 L811.8,362.3 L812.0,338.6 L812.2,330.4 L812.5,339.2 L812.8,344.1 L813.0,340.3 L813.2,333.6 L813.5,328.3 L813.8,356.5 L814.0,335.7 L814.2,334.9 L814.5,336.3 L814.8,360.0 L815.0,332.2 L815.2,326.3 L815.5,333.0 L815.8,352.5 L816.0,358.5 L816.2,310.4 L816.5,52.2 L816.8,316.8 L817.0,351.4 L817.2,52.2 L817.5,320.2 L817.8,351.1 L818.0,360.7 L818.2,338.1 L818.5,327.0 L818.8,346.1 L819.0,339.4 L819.2,325.9 L819.5,336.6 L819.8,362.5 L820.0,341.5 L820.2,335.6 L820.5,347.1 L820.8,351.3 L821.0,369.0 L821.2,326.2 L821.5,328.8 L821.8,346.7 L822.0,373.4 L822.2,342.5 L822.5,341.7 L822.8,353.5 L823.0,394.5 L823.2,343.6 L823.5,348.2 L823.8,354.1 L824.0,388.6 L824.2,354.2 L824.5,355.6 L824.8,362.5 L825.0,371.4 L825.2,348.8 L825.5,344.5 L825.8,358.7 L826.0,370.2 L826.2,353.0 L826.5,354.0 L826.8,367.6 L827.0,371.4 L827.2,345.3 L827.5,368.6 L827.8,390.6 L828.0,362.1 L828.2,348.9 L828.5,357.2 L828.8,376.1 L829.0,398.4 L829.2,362.4 L829.5,366.7 L829.8,381.0 L830.0,390.5 L830.2,355.9 L830.5,356.6 L830.8,377.1 L831.0,395.6 L831.2,349.0 L831.5,356.9 L831.8,384.0 L832.0,386.6 L832.2,372.8 L832.5,350.6 L832.8,381.1 L833.0,400.5 L833.2,350.3 L833.5,353.3 L833.8,382.5 L834.0,396.7 L834.2,361.7 L834.5,368.6 L834.8,383.7 L835.0,386.1 L835.2,363.5 L835.5,362.6 L835.8,383.0 L836.0,376.6 L836.2,359.1 L836.5,364.3 L836.8,381.9 L837.0,385.8 L837.2,359.2 L837.5,381.8 L837.8,389.8 L838.0,376.3 L838.2,356.9 L838.5,361.5 L838.8,380.9 L839.0,393.0 L839.2,370.4 L839.5,368.4 L839.8,400.5 L840.0,395.1 L840.2,357.7 L840.5,371.7 L840.8,394.7 L841.0,400.5 L841.2,375.7 L841.5,369.7 L841.8,400.5 L842.0,391.8 L842.2,365.2 L842.5,367.1 L842.8,376.5 L843.0,385.7 L843.2,374.0 L843.5,372.8 L843.8,382.4 L844.0,389.3 L844.2,376.0 L844.5,371.9 L844.8,381.6 L845.0,373.7 L845.2,363.1 L845.5,361.0 L845.8,378.8 L846.0,400.5 L846.2,367.7 L846.5,372.0 L846.8,397.2 L847.0,400.5 L847.2,379.1 L847.5,358.4 L847.8,391.6 L848.0,400.5 L848.2,386.4 L848.5,365.6 L848.8,400.5 L849.0,400.5 L849.2,368.5 L849.5,367.9 L849.8,375.5 L850.0,398.3 L850.2,364.8 L850.5,364.7 L850.8,400.5 L851.0,392.5 L851.2,379.8 L851.5,372.8 L851.8,389.7 L852.0,377.4 L852.2,365.7 L852.5,367.6 L852.8,400.5 L853.0,400.5 L853.2,376.9 L853.5,376.7 L853.8,392.9 L854.0,395.8 L854.2,381.3 L854.5,380.3 L854.8,391.9 L855.0,400.5 L855.2,374.7 L855.5,366.4 L855.8,383.6 L856.0,400.5 L856.2,367.4 L856.5,372.4 L856.8,393.7 L857.0,400.5 L857.2,382.6 L857.5,370.1 L857.8,372.6 L858.0,395.5 L858.2,368.6 L858.5,380.1 L858.8,400.5 L859.0,400.5 L859.2,374.4 L859.5,369.4 L859.8,388.1 L860.0,400.5 L860.2,379.5 L860.5,393.1 L860.8,400.5 L861.0,397.6 L861.2,379.2 L861.5,378.7 L861.8,400.5 L862.0,400.5 L862.2,390.3 L862.5,370.4 L862.8,400.5 L863.0,400.5 L863.2,376.8 L863.5,374.7 L863.8,386.9 L864.0,400.5 L864.2,374.0 L864.5,371.5 L864.8,388.6 L865.0,400.5 L865.2,362.6 L865.5,378.0 L865.8,400.5 L866.0,400.5 L866.2,382.4 L866.5,376.0 L866.8,400.5 L867.0,397.7 L867.2,373.9 L867.5,370.4 L867.8,383.2 L868.0,393.3 L868.2,377.6 L868.5,374.6 L868.8,398.4 L869.0,400.5 L869.2,385.9 L869.5,380.9 L869.8,396.9 L870.0,400.5 L870.2,382.2 L870.5,380.9 L870.8,392.1 L871.0,400.5 L871.2,367.8 L871.5,378.4 L871.8,396.3 L872.0,400.5 L872.2,383.5 L872.5,380.8 L872.8,400.5 L873.0,400.5 L873.2,375.9 L873.5,373.2 L873.8,400.5 L874.0,387.8 L874.2,364.2 L874.5,367.2 L874.8,395.2 L875.0,400.5 L875.2,380.2 L875.5,372.1 L875.8,400.5 L876.0,400.5 L876.2,374.1 L876.5,371.8 L876.8,394.6 L877.0,399.3 L877.2,375.3 L877.5,371.6 L877.8,400.5 L878.0,396.6 L878.2,371.4 L878.5,380.0 L878.8,400.5 L879.0,400.5 L879.2,383.3 L879.5,372.0 L879.8,395.0 L880.0,400.5 L880.2,384.7 L880.5,379.5 L880.8,400.5 L881.0,400.5 L881.2,375.3 L881.5,374.3 L881.8,400.5 L882.0,387.1 L882.2,374.7 L882.5,370.7 L882.8,399.2 L883.0,400.5 L883.2,387.8 L883.5,374.9 L883.8,392.6 L884.0,400.5 L884.2,374.6 L884.5,367.9 L884.8,397.6 L885.0,400.5 L885.2,379.0 L885.5,368.5 L885.8,400.5 L886.0,400.5 L886.2,370.6 L886.5,396.3 L886.8,400.5 L887.0,400.5 L887.2,375.6 L887.5,374.0 L887.8,400.5 L888.0,400.5 L888.2,371.6 L888.5,372.8 L888.8,400.5 L889.0,400.5 L889.2,372.9 L889.5,375.5 L889.8,400.5 L890.0,400.5 L890.2,375.8 L890.5,381.7 L890.8,400.5 L891.0,400.5 L891.2,369.9 L891.5,376.8 L891.8,400.5 L892.0,400.5 L892.2,370.2 L892.5,382.5 L892.8,400.5 L893.0,393.5 L893.2,378.8 L893.5,374.5 L893.8,400.5 L894.0,400.5 L894.2,375.5 L894.5,376.8 L894.8,400.5 L895.0,400.5 L895.2,387.2 L895.5,371.3 L895.8,400.5 L896.0,400.5 L896.2,379.0 L896.5,370.8 L896.8,400.5 L897.0,400.5 L897.2,374.1 L897.5,383.7 L897.8,397.4 L898.0,400.5 L898.2,379.1 L898.5,379.0 L898.8,400.5 L899.0,398.1 L899.2,368.7 L899.5,372.1 L899.8,400.5 L900.0,400.5 L900.2,379.8 L900.5,373.5 L900.8,400.5 L901.0,400.5 L901.2,386.9 L901.5,374.8 L901.8,400.5 L902.0,400.5 L902.2,373.7 L902.5,376.7 L902.8,400.5 L903.0,400.5 L903.2,374.3 L903.5,377.4 L903.8,400.5 L904.0,390.4 L904.2,369.0 L904.5,364.2 L904.8,399.7 L905.0,400.5 L905.2,377.9 L905.5,372.4 L905.8,400.5 L906.0,400.5 L906.2,375.3 L906.5,376.5 L906.8,389.8 L907.0,400.5 L907.2,365.8 L907.5,371.8 L907.8,400.5 L908.0,400.5 L908.2,370.5 L908.5,383.0 L908.8,400.5 L909.0,400.5 L909.2,373.6 L909.5,382.8 L909.8,400.5 L910.0,400.5 L910.2,388.9 L910.5,370.1 L910.8,400.5 L911.0,400.5 L911.2,372.1 L911.5,365.5 L911.8,400.5 L912.0,400.5 L912.2,374.4 L912.5,371.9 L912.8,400.5 L913.0,400.5 L913.2,393.2 L913.5,372.7 L913.8,393.9 L914.0,400.5 L914.2,374.9 L914.5,373.7 L914.8,400.5 L915.0,392.4 L915.2,371.4 L915.5,374.6 L915.8,400.5 L916.0,400.5 L916.2,376.9 L916.5,370.0 L916.8,400.5 L917.0,397.0 L917.2,372.6 L917.5,375.4 L917.8,400.5 L918.0,400.5 L918.2,401.8 L918.5,389.9 L918.8,400.5 L919.0,400.2 L919.2,378.0 L919.5,374.0 L919.8,400.5 L920.0,400.5 L920.2,381.3 L920.5,379.1 L920.8,395.3 L921.0,400.5 L921.2,365.6 L921.5,370.2 L921.8,400.5 L922.0,400.5 L922.2,371.0 L922.5,384.7 L922.8,400.5 L923.0,400.5 L923.2,381.5 L923.5,376.9 L923.8,400.5 L924.0,400.5 L924.2,390.5 L924.5,363.9 L924.8,400.5 L925.0,400.5 L925.2,381.2 L925.5,378.5 L925.8,400.5 L926.0,399.9 L926.2,368.6 L926.5,376.0 L926.8,400.5 L927.0,400.5 L927.2,370.9 L927.5,384.1 L927.8,400.5 L928.0,400.5 L928.2,373.6 L928.5,375.2 L928.8,399.2 L929.0,400.5 L929.2,374.3 L929.5,384.5 L929.8,400.5 L930.0,397.4 L930.2,375.0 L930.5,368.0 L930.8,400.5 L931.0,400.0 L931.2,371.1 L931.5,374.1 L931.8,400.5 L932.0,400.5 L932.2,388.3 L932.5,365.9 L932.8,400.5 L933.0,393.9 L933.2,384.4 L933.5,388.8 L933.8,400.5 L934.0,400.5 L934.2,392.5 L934.5,376.9 L934.8,400.5 L935.0,400.5 L935.2,379.9 L935.5,376.6 L935.8,400.5 L936.0,400.5 L936.2,379.3 L936.5,369.6 L936.8,400.5 L937.0,400.5 L937.2,376.5 L937.5,381.7 L937.8,400.5 L938.0,400.5 L938.2,380.0 L938.5,378.8 L938.8,400.5 L939.0,400.5 L939.2,377.5 L939.5,368.9 L939.8,399.5 L940.0,400.5 L940.2,361.0 L940.5,374.2 L940.8,400.5 L941.0,400.5 L941.2,377.3 L941.5,377.4 L941.8,399.5 L942.0,400.5 L942.2,379.3 L942.5,389.8 L942.8,400.5 L943.0,400.5 L943.2,387.7 L943.5,391.1 L943.8,400.5 L944.0,400.5 L944.2,372.4 L944.5,373.0 L944.8,400.0 L945.0,400.5 L945.2,373.4 L945.5,377.4 L945.8,398.7 L946.0,400.5 L946.2,368.8 L946.5,378.5 L946.8,400.5 L947.0,400.5 L947.2,375.8 L947.5,368.1 L947.8,400.5 L948.0,400.5 L948.2,367.9 L948.5,384.6 L948.8,400.5 L949.0,400.5 L949.2,377.7 L949.5,381.4 L949.8,400.5 L950.0,400.5 L950.2,383.9 L950.5,374.7 L950.8,400.5 L951.0,400.5 L951.2,369.5 L951.5,372.6 L951.8,400.5 L952.0,400.5 L952.2,380.9 L952.5,377.9 L952.8,400.5 L953.0,400.5 L953.2,374.3 L953.5,375.5 L953.8,400.5 L954.0,400.5 L954.2,384.9 L954.5,368.2 L954.8,400.5 L955.0,398.2 L955.2,370.3 L955.5,377.9 L955.8,400.5 L956.0,400.5 L956.2,368.4 L956.5,376.5 L956.8,400.5 L957.0,400.5 L957.2,381.6 L957.5,373.3 L957.8,400.5 L958.0,400.5 L958.2,373.8 L958.5,369.1 L958.8,400.1 L959.0,400.5 L959.2,386.8 L959.5,368.4 L959.8,400.5 L960.0,400.5 L960.2,375.3 L960.5,379.3 L960.8,400.5 L961.0,400.5 L961.2,385.3 L961.5,385.8 L961.8,400.5 L962.0,400.5 L962.2,379.8 L962.5,377.5 L962.8,400.5 L963.0,400.5 L963.2,375.0 L963.5,367.5 L963.8,400.5 L964.0,400.5 L964.2,381.7 L964.5,369.4 L964.8,400.5 L965.0,400.5 L965.2,370.1 L965.5,376.9 L965.8,400.5 L966.0,400.5 L966.2,366.9 L966.5,374.5 L966.8,400.5 L967.0,400.5 L967.2,376.4 L967.5,374.0 L967.8,400.5 L968.0,400.5 L968.2,374.9 L968.5,376.4 L968.8,400.5 L969.0,400.5 L969.2,376.1 L969.5,372.4 L969.8,400.5 L970.0,400.5 L970.2,362.9 L970.5,375.8 L970.8,400.5 L971.0,400.5 L971.2,385.6 L971.5,373.7 L971.8,400.5 L972.0,400.5 L972.2,369.2 L972.5,382.2 L972.8,400.5 L973.0,400.5 L973.2,370.5 L973.5,378.2 L973.8,400.5 L974.0,400.5 L974.2,379.3 L974.5,374.1 L974.8,400.5 L975.0,400.5 L975.2,364.3 L975.5,375.8 L975.8,400.5 L976.0,400.5 L976.2,385.2 L976.5,381.9 L976.8,400.5 L977.0,400.5 L977.2,373.9 L977.5,375.8 L977.8,400.5 L978.0,400.5 L978.2,382.9 L978.5,371.9 L978.8,400.5 L979.0,400.5 L979.2,375.6 L979.5,376.1 L979.8,400.5 L980.0,400.5 L980.2,364.5 L980.5,372.0 L980.8,400.5 L981.0,400.5 L981.2,384.0 L981.5,379.7 L981.8,400.5 L982.0,400.5 L982.2,368.1 L982.5,383.1 L982.8,400.5 L983.0,400.5 L983.2,373.9 L983.5,386.3 L983.8,400.5 L984.0,400.5 L984.2,373.9 L984.5,383.6 L984.8,400.5 L985.0,400.5 L985.2,377.6 L985.5,376.9 L985.8,400.5 L986.0,400.5 L986.2,383.2 L986.5,369.8 L986.8,400.5 L987.0,400.5 L987.2,373.0 L987.5,371.2 L987.8,400.5 L988.0,400.5 L988.2,377.4 L988.5,391.9 L988.8,400.5 L989.0,400.5 L989.2,363.1 L989.5,378.9 L989.8,400.5 L990.0,400.5 L990.2,380.2 L990.5,381.1 L990.8,400.5 L991.0,400.5 L991.2,384.7 L991.5,374.2 L991.8,400.5 L992.0,400.5 L992.2,385.7 L992.5,382.2 L992.8,400.5 L993.0,400.5 L993.2,367.6 L993.5,388.0 L993.8,400.5 L994.0,400.5 L994.2,380.1 L994.5,367.7 L994.8,400.5 L995.0,400.5 L995.2,368.8 L995.5,380.4 L995.8,400.5 L996.0,400.5 L996.2,387.8 L996.5,382.6 L996.8,400.5 L997.0,400.5 L997.2,372.1 L997.5,371.5 L997.8,400.5 L998.0,400.5 L998.2,373.7 L998.5,368.8 L998.8,400.5 L999.0,400.5 L999.2,383.9 L999.5,383.2 L999.8,400.5 L1000.0,400.5 L1000.2,368.8 L1000.5,378.3 L1000.8,400.5 L1001.0,400.5 L1001.2,373.8 L1001.5,367.8 L1001.8,400.5 L1002.0,400.5 L1002.2,381.0 L1002.5,380.8 L1002.8,400.5 L1003.0,400.5 L1003.2,400.5 L1003.5,366.8 L1003.8,400.5 L1004.0,400.5 L1004.2,382.3 L1004.5,374.2 L1004.8,400.5 L1005.0,400.5 L1005.2,368.9 L1005.5,378.5 L1005.8,400.5 L1006.0,400.5 L1006.2,371.6 L1006.5,368.6 L1006.8,400.5 L1007.0,400.5 L1007.2,384.0 L1007.5,371.0 L1007.8,400.5 L1008.0,400.5 L1008.2,381.0 L1008.5,374.1 L1008.8,400.5 L1009.0,400.5 L1009.2,371.3 L1009.5,368.8 L1009.8,400.5 L1010.0,400.5 L1010.2,380.2 L1010.5,374.1 L1010.8,400.5 L1011.0,400.5 L1011.2,375.7 L1011.5,376.0 L1011.8,400.5 L1012.0,387.0 L1012.2,368.7" fill="none" stroke="#6a82b6" stroke-width="1.5" stroke-opacity="0.8" clip-path="url(#lowc)"/>
<path d="M562.0,368.6 C562.8,369.0 564.4,367.7 566.8,370.8 C569.2,373.9 574.2,386.5 576.5,387.4 C578.8,388.3 579.2,378.2 580.8,376.0 C582.4,373.8 583.8,375.3 586.1,374.0 C588.4,372.7 591.8,370.2 594.7,368.1 C597.6,366.0 600.2,362.5 603.3,361.6 C606.3,360.7 610.4,359.4 613.0,362.7 C615.6,366.0 617.3,380.0 618.9,381.5 C620.5,383.0 621.0,375.6 622.7,371.9 C624.4,368.1 627.5,360.6 629.1,359.0 C630.7,357.4 631.2,358.4 632.3,362.2 C633.4,365.9 634.2,379.4 635.6,381.5 C637.0,383.6 639.5,377.3 640.9,375.0 C642.3,372.7 642.8,365.4 644.1,367.6 C645.4,369.8 647.1,388.4 648.5,388.0 C649.9,387.6 651.3,366.8 652.7,365.4 C654.1,364.0 655.6,374.8 657.0,379.4 C658.4,384.0 660.0,394.2 661.3,393.3 C662.6,392.4 664.1,374.1 665.0,374.0 C665.9,373.9 666.0,389.5 666.6,392.5 C667.2,395.6 667.9,394.3 668.5,392.1 C669.1,390.0 669.7,377.9 670.3,379.5 C670.9,381.1 671.5,400.5 672.1,401.8 C672.7,400.5 673.3,382.3 673.8,377.5 C674.4,372.6 675.0,374.1 675.5,372.9 C676.1,371.8 676.6,368.6 677.2,370.5 C677.7,372.4 678.3,385.5 678.8,384.4 C679.3,383.2 679.8,363.8 680.4,363.8 C680.9,363.8 681.4,378.3 681.9,384.3 C682.4,390.4 682.9,400.5 683.4,399.9 C683.9,399.0 684.4,382.1 684.9,378.7 C685.3,375.4 685.8,380.1 686.3,379.8 C686.8,379.6 687.2,374.0 687.7,377.1 C688.2,380.2 688.6,397.8 689.1,398.5 C689.5,399.2 690.0,385.9 690.4,381.5 C690.8,377.0 691.3,371.8 691.7,371.7 C692.2,371.6 692.6,378.7 693.0,380.9 C693.4,383.1 693.9,385.8 694.3,385.0 C694.7,384.1 695.1,373.1 695.5,375.8 C695.9,378.6 696.3,400.5 696.7,401.5 C697.1,400.5 697.5,378.5 697.9,374.9 C698.3,371.3 698.9,379.1 699.1,379.9 L700.0,370.4 L700.2,370.4 L701.0,386.1 L701.2,386.1 L702.5,380.7 L702.8,380.7 L703.5,387.6 L703.8,387.6 L704.5,396.1 L704.8,396.1 L705.5,390.3 L705.8,390.3 L706.5,400.5 L706.8,401.8 L707.5,387.5 L707.8,387.5 L708.5,366.8 L708.8,366.8 L709.5,373.1 L709.8,373.1 L710.5,400.0 L710.8,400.0 L711.5,393.2 L711.8,393.2 L712.5,371.7 L712.8,371.7 L713.5,401.8 L713.8,400.5 L714.5,392.9 L714.8,392.9 L715.0,386.6 L715.2,386.6 L716.0,374.1 L716.2,374.1 L717.0,370.7 L717.2,370.7 L718.0,384.7 L718.2,384.7 L718.5,387.2 L718.8,387.2 L719.5,392.0 L719.8,392.0 L720.5,388.1 L720.8,388.1 L721.5,394.7 L721.8,394.7 L722.0,381.1 L722.2,381.1 L723.0,391.5 L723.2,391.5 L723.5,376.9 L723.8,376.9 L724.5,377.5 L724.8,377.5 L725.5,397.8 L725.8,397.8 L726.0,385.1 L726.2,385.1 L727.0,376.2 L727.2,376.2 L727.5,400.0 L727.8,400.0 L728.5,394.1 L728.8,394.1 L729.0,381.3 L729.2,381.3 L729.5,375.4 L729.8,375.4 L730.0,393.9 L730.2,380.8 L730.5,381.2 L730.8,381.2 L731.0,380.7 L731.2,376.6 L731.5,386.6 L731.8,386.6 L732.0,400.5 L732.2,392.7 L732.5,388.9 L732.8,388.9 L733.0,397.4 L733.2,397.4 L733.5,393.8 L733.8,400.5 L734.0,380.5 L734.2,380.5 L734.5,371.9 L734.8,372.2 L735.0,381.3 L735.2,381.3 L735.5,376.1 L735.8,378.7 L736.0,379.9 L736.2,379.9 L736.5,390.1 L736.8,393.9 L737.0,373.5 L737.2,373.5 L737.5,368.6 L737.8,373.1 L738.0,400.5 L738.2,365.8 L738.5,360.1 L738.8,360.1 L739.0,373.1 L739.2,364.5 L739.5,390.6 L739.8,390.6 L740.0,400.5 L740.2,401.8 L740.5,387.0 L740.8,392.7 L741.0,376.5 L741.2,376.5 L741.5,371.4 L741.8,375.0 L742.0,381.4 L742.2,373.0 L742.5,388.9 L742.8,388.9 L743.0,389.9 L743.2,384.7 L743.5,367.5 L743.8,379.1 L744.0,369.3 L744.2,369.3 L744.5,378.2 L744.8,378.6 L745.0,375.7 L745.2,373.6 L745.5,380.2 L745.8,380.3 L746.0,391.0 L746.2,391.0 L746.5,399.9 L746.8,400.5 L747.0,383.0 L747.2,371.6 L747.5,366.9 L747.8,368.9 L748.0,390.8 L748.2,383.7 L748.5,387.7 L748.8,387.7 L749.0,380.7 L749.2,368.2 L749.5,364.0 L749.8,365.9 L750.0,390.9 L750.2,372.5 L750.5,401.6 L750.8,400.5 L751.0,393.5 L751.2,387.9 L751.5,378.7 L751.8,384.8 L752.0,380.5 L752.2,379.0 L752.5,376.6 L752.8,378.2 L753.0,395.5 L753.2,383.7 L753.5,374.9 L753.8,382.4 L754.0,387.9 L754.2,374.6 L754.5,376.5 L754.8,381.2 L755.0,389.3 L755.2,382.0 L755.5,370.1 L755.8,376.0 L756.0,393.1 L756.2,373.9 L756.5,383.5 L756.8,400.5 L757.0,378.6 L757.2,377.8 L757.5,380.6 L757.8,380.9 L758.0,375.1 L758.2,371.9 L758.5,374.5 L758.8,379.3 L759.0,383.9 L759.2,367.3 L759.5,375.2 L759.8,385.4 L760.0,379.5 L760.2,379.0 L760.5,384.3 L760.8,386.9 L761.0,383.9 L761.2,377.5 L761.5,371.7 L761.8,381.1 L762.0,375.4 L762.2,368.7 L762.5,369.0 L762.8,373.8 L763.0,387.8 L763.2,385.5 L763.5,372.4 L763.8,399.3 L764.0,377.7 L764.2,373.5 L764.5,379.9 L764.8,396.2 L765.0,400.5 L765.2,396.5 L765.5,380.4 L765.8,382.5 L766.0,396.9 L766.2,374.3 L766.5,374.4 L766.8,380.3 L767.0,377.1 L767.2,365.7 L767.5,368.1 L767.8,376.9 L768.0,400.5 L768.2,381.8 L768.5,383.2 L768.8,391.9 L769.0,400.5 L769.2,385.0 L769.5,386.7 L769.8,400.5 L770.0,391.2 L770.2,376.1 L770.5,365.0 L770.8,367.2 L771.0,381.6 L771.2,375.6 L771.5,375.2 L771.8,381.5 L772.0,393.1 L772.2,374.4 L772.5,374.6 L772.8,376.4 L773.0,386.8 L773.2,382.6 L773.5,378.6 L773.8,387.2 L774.0,379.8 L774.2,376.5 L774.5,374.2 L774.8,378.0 L775.0,382.6 L775.2,374.1 L775.5,372.0 L775.8,398.9 L776.0,366.6 L776.2,358.6 L776.5,360.5 L776.8,378.2 L777.0,374.2 L777.2,368.9 L777.5,362.4 L777.8,392.5 L778.0,371.1 L778.2,366.1 L778.5,381.3 L778.8,397.0 L779.0,399.6 L779.2,373.9 L779.5,369.2 L779.8,375.8 L780.0,383.4 L780.2,371.5 L780.5,374.9 L780.8,395.9 L781.0,388.7 L781.2,378.0 L781.5,368.9 L781.8,385.4 L782.0,400.5 L782.2,389.6 L782.5,371.4 L782.8,396.5 L783.0,400.5 L783.2,364.0 L783.5,374.1 L783.8,397.2 L784.0,378.3 L784.2,369.9 L784.5,374.9 L784.8,395.2 L785.0,373.1 L785.2,370.2 L785.5,365.3 L785.8,375.9 L786.0,386.7 L786.2,377.3 L786.5,367.4 L786.8,375.2 L787.0,399.4 L787.2,364.7 L787.5,371.3 L787.8,386.7 L788.0,384.5 L788.2,372.2 L788.5,377.5 L788.8,384.4 L789.0,399.1 L789.2,382.7 L789.5,370.3 L789.8,378.8 L790.0,389.9 L790.2,383.2 L790.5,375.4 L790.8,393.5 L791.0,390.7 L791.2,370.2 L791.5,368.3 L791.8,378.8 L792.0,385.9 L792.2,381.5 L792.5,353.6 L792.8,366.1 L793.0,385.0 L793.2,359.1 L793.5,357.1 L793.8,361.8 L794.0,382.6 L794.2,362.0 L794.5,363.4 L794.8,371.2 L795.0,376.4 L795.2,368.9 L795.5,366.9 L795.8,380.5 L796.0,379.9 L796.2,357.5 L796.5,353.1 L796.8,358.2 L797.0,361.6 L797.2,351.0 L797.5,354.2 L797.8,384.6 L798.0,386.1 L798.2,375.5 L798.5,361.4 L798.8,377.1 L799.0,365.7 L799.2,357.9 L799.5,360.7 L799.8,378.9 L800.0,382.9 L800.2,358.5 L800.5,359.1 L800.8,368.9 L801.0,380.6 L801.2,353.9 L801.5,352.5 L801.8,362.1 L802.0,364.0 L802.2,351.4 L802.5,364.0 L802.8,400.4 L803.0,382.6 L803.2,348.4 L803.5,348.3 L803.8,364.8 L804.0,361.3 L804.2,360.0 L804.5,342.1 L804.8,351.0 L805.0,350.8 L805.2,347.6 L805.5,351.4 L805.8,361.2 L806.0,368.7 L806.2,356.6 L806.5,346.1 L806.8,366.8 L807.0,372.9 L807.2,349.9 L807.5,366.7 L807.8,368.4 L808.0,352.0 L808.2,339.7 L808.5,349.8 L808.8,373.3 L809.0,378.8 L809.2,362.6 L809.5,336.2 L809.8,382.1 L810.0,377.2 L810.2,352.3 L810.5,331.6 L810.8,389.9 L811.0,338.9 L811.2,334.1 L811.5,342.3 L811.8,358.2 L812.0,361.3 L812.2,334.2 L812.5,337.9 L812.8,352.1 L813.0,354.1 L813.2,336.1 L813.5,339.4 L813.8,352.9 L814.0,356.5 L814.2,332.9 L814.5,324.8 L814.8,338.6 L815.0,343.3 L815.2,325.2 L815.5,320.8 L815.8,323.7 L816.0,355.2 L816.2,329.0 L816.5,51.6 L816.8,333.2 L817.0,340.9 L817.2,51.6 L817.5,331.1 L817.8,337.0 L818.0,360.8 L818.2,329.9 L818.5,319.6 L818.8,332.2 L819.0,371.1 L819.2,342.8 L819.5,340.9 L819.8,355.6 L820.0,339.8 L820.2,332.2 L820.5,343.7 L820.8,355.0 L821.0,357.0 L821.2,331.7 L821.5,336.2 L821.8,339.1 L822.0,356.0 L822.2,332.5 L822.5,345.9 L822.8,353.6 L823.0,390.9 L823.2,362.1 L823.5,354.0 L823.8,379.1 L824.0,370.8 L824.2,338.7 L824.5,368.0 L824.8,380.4 L825.0,368.5 L825.2,346.1 L825.5,352.6 L825.8,360.0 L826.0,366.9 L826.2,351.2 L826.5,354.1 L826.8,389.5 L827.0,366.4 L827.2,344.9 L827.5,345.5 L827.8,362.0 L828.0,380.4 L828.2,347.8 L828.5,355.3 L828.8,388.7 L829.0,354.2 L829.2,348.1 L829.5,358.2 L829.8,378.6 L830.0,369.6 L830.2,363.1 L830.5,366.0 L830.8,386.2 L831.0,400.5 L831.2,360.1 L831.5,362.1 L831.8,371.7 L832.0,378.2 L832.2,367.3 L832.5,349.3 L832.8,359.5 L833.0,393.8 L833.2,356.7 L833.5,352.4 L833.8,386.5 L834.0,379.8 L834.2,360.5 L834.5,356.6 L834.8,399.2 L835.0,380.6 L835.2,355.0 L835.5,354.8 L835.8,389.4 L836.0,396.5 L836.2,364.3 L836.5,377.6 L836.8,389.4 L837.0,377.7 L837.2,368.2 L837.5,363.9 L837.8,383.5 L838.0,376.7 L838.2,367.5 L838.5,376.8 L838.8,388.7 L839.0,382.4 L839.2,362.4 L839.5,361.2 L839.8,400.5 L840.0,386.9 L840.2,370.5 L840.5,359.0 L840.8,392.9 L841.0,391.6 L841.2,362.5 L841.5,363.8 L841.8,385.4 L842.0,400.5 L842.2,380.9 L842.5,363.2 L842.8,384.8 L843.0,400.5 L843.2,375.9 L843.5,362.1 L843.8,400.5 L844.0,389.2 L844.2,370.3 L844.5,363.7 L844.8,377.6 L845.0,393.9 L845.2,376.5 L845.5,369.7 L845.8,385.0 L846.0,395.0 L846.2,377.1 L846.5,358.2 L846.8,380.1 L847.0,383.0 L847.2,363.4 L847.5,372.2 L847.8,385.9 L848.0,398.9 L848.2,364.2 L848.5,370.2 L848.8,394.8 L849.0,398.2 L849.2,368.6 L849.5,369.3 L849.8,391.3 L850.0,400.5 L850.2,382.5 L850.5,382.6 L850.8,397.0 L851.0,400.5 L851.2,385.3 L851.5,373.7 L851.8,400.5 L852.0,398.0 L852.2,386.7 L852.5,370.2 L852.8,400.5 L853.0,396.1 L853.2,365.4 L853.5,365.8 L853.8,388.6 L854.0,398.8 L854.2,367.6 L854.5,371.3 L854.8,395.4 L855.0,400.5 L855.2,377.4 L855.5,365.0 L855.8,391.0 L856.0,400.5 L856.2,373.3 L856.5,376.5 L856.8,399.0 L857.0,397.1 L857.2,366.7 L857.5,376.4 L857.8,400.5 L858.0,400.5 L858.2,366.9 L858.5,374.4 L858.8,394.8 L859.0,391.3 L859.2,358.9 L859.5,380.7 L859.8,400.5 L860.0,397.9 L860.2,376.9 L860.5,370.1 L860.8,400.5 L861.0,400.5 L861.2,368.5 L861.5,376.4 L861.8,399.3 L862.0,391.3 L862.2,373.7 L862.5,372.1 L862.8,388.7 L863.0,400.5 L863.2,367.3 L863.5,379.2 L863.8,398.0 L864.0,394.5 L864.2,381.7 L864.5,380.4 L864.8,400.5 L865.0,396.2 L865.2,371.9 L865.5,378.5 L865.8,385.0 L866.0,400.5 L866.2,383.2 L866.5,379.4 L866.8,395.7 L867.0,396.0 L867.2,378.6 L867.5,380.3 L867.8,400.5 L868.0,400.5 L868.2,370.9 L868.5,378.0 L868.8,400.5 L869.0,400.5 L869.2,369.0 L869.5,373.3 L869.8,400.5 L870.0,399.7 L870.2,368.5 L870.5,371.4 L870.8,400.5 L871.0,400.5 L871.2,375.9 L871.5,366.7 L871.8,392.4 L872.0,400.5 L872.2,369.4 L872.5,370.3 L872.8,384.5 L873.0,400.5 L873.2,381.5 L873.5,374.4 L873.8,400.5 L874.0,399.7 L874.2,373.0 L874.5,372.8 L874.8,400.5 L875.0,400.5 L875.2,369.6 L875.5,377.1 L875.8,388.0 L876.0,400.5 L876.2,372.2 L876.5,373.0 L876.8,400.5 L877.0,400.5 L877.2,377.6 L877.5,379.9 L877.8,400.5 L878.0,400.5 L878.2,364.3 L878.5,376.7 L878.8,400.2 L879.0,381.9 L879.2,360.5 L879.5,370.3 L879.8,384.1 L880.0,391.6 L880.2,371.2 L880.5,373.0 L880.8,384.6 L881.0,396.7 L881.2,370.1 L881.5,394.2 L881.8,400.5 L882.0,392.4 L882.2,370.6 L882.5,381.0 L882.8,389.6 L883.0,400.5 L883.2,384.0 L883.5,372.7 L883.8,400.5 L884.0,400.5 L884.2,377.2 L884.5,373.5 L884.8,400.5 L885.0,391.3 L885.2,370.6 L885.5,375.6 L885.8,397.1 L886.0,400.5 L886.2,369.8 L886.5,379.6 L886.8,399.1 L887.0,400.5 L887.2,380.5 L887.5,377.2 L887.8,400.5 L888.0,400.5 L888.2,380.3 L888.5,379.2 L888.8,400.5 L889.0,400.5 L889.2,378.2 L889.5,371.0 L889.8,399.4 L890.0,384.3 L890.2,364.8 L890.5,367.8 L890.8,398.4 L891.0,400.5 L891.2,377.7 L891.5,374.1 L891.8,393.7 L892.0,400.5 L892.2,377.1 L892.5,364.4 L892.8,400.5 L893.0,400.5 L893.2,369.1 L893.5,366.8 L893.8,400.5 L894.0,399.7 L894.2,373.8 L894.5,370.0 L894.8,400.5 L895.0,400.5 L895.2,373.0 L895.5,377.5 L895.8,400.5 L896.0,400.5 L896.2,380.6 L896.5,384.2 L896.8,400.5 L897.0,400.5 L897.2,382.3 L897.5,382.3 L897.8,400.5 L898.0,400.5 L898.2,367.5 L898.5,381.9 L898.8,400.5 L899.0,400.5 L899.2,388.7 L899.5,373.6 L899.8,400.5 L900.0,400.5 L900.2,381.8 L900.5,370.8 L900.8,400.5 L901.0,400.5 L901.2,379.2 L901.5,373.6 L901.8,396.5 L902.0,397.9 L902.2,371.5 L902.5,379.4 L902.8,400.5 L903.0,400.5 L903.2,371.5 L903.5,371.1 L903.8,400.5 L904.0,396.6 L904.2,385.5 L904.5,385.6 L904.8,400.5 L905.0,400.5 L905.2,368.7 L905.5,381.9 L905.8,400.5 L906.0,394.2 L906.2,376.8 L906.5,378.2 L906.8,400.5 L907.0,400.5 L907.2,368.5 L907.5,377.8 L907.8,400.5 L908.0,400.5 L908.2,372.9 L908.5,373.4 L908.8,400.5 L909.0,400.5 L909.2,382.8 L909.5,368.2 L909.8,400.5 L910.0,400.5 L910.2,365.0 L910.5,380.7 L910.8,400.5 L911.0,400.5 L911.2,384.0 L911.5,373.7 L911.8,400.5 L912.0,400.5 L912.2,384.5 L912.5,373.2 L912.8,400.5 L913.0,400.5 L913.2,378.7 L913.5,375.0 L913.8,400.5 L914.0,400.5 L914.2,371.9 L914.5,378.8 L914.8,400.5 L915.0,400.5 L915.2,374.9 L915.5,371.3 L915.8,400.5 L916.0,400.5 L916.2,374.7 L916.5,377.1 L916.8,396.4 L917.0,400.5 L917.2,380.4 L917.5,370.6 L917.8,400.5 L918.0,400.5 L918.2,382.8 L918.5,372.9 L918.8,399.4 L919.0,400.5 L919.2,371.1 L919.5,368.9 L919.8,400.5 L920.0,400.5 L920.2,366.1 L920.5,368.0 L920.8,400.5 L921.0,400.5 L921.2,370.2 L921.5,378.5 L921.8,400.5 L922.0,400.5 L922.2,368.3 L922.5,377.8 L922.8,400.5 L923.0,400.5 L923.2,376.6 L923.5,380.3 L923.8,400.5 L924.0,397.9 L924.2,373.3 L924.5,384.1 L924.8,400.5 L925.0,400.5 L925.2,376.3 L925.5,376.2 L925.8,400.5 L926.0,400.5 L926.2,383.8 L926.5,368.1 L926.8,400.5 L927.0,397.5 L927.2,372.5 L927.5,386.9 L927.8,400.5 L928.0,400.5 L928.2,375.5 L928.5,374.5 L928.8,400.5 L929.0,399.9 L929.2,372.6 L929.5,381.3 L929.8,400.5 L930.0,400.5 L930.2,364.5 L930.5,374.4 L930.8,399.5 L931.0,400.5 L931.2,376.8 L931.5,367.9 L931.8,400.5 L932.0,400.5 L932.2,373.2 L932.5,365.9 L932.8,400.5 L933.0,400.5 L933.2,375.4 L933.5,368.4 L933.8,400.5 L934.0,400.5 L934.2,372.5 L934.5,362.9 L934.8,400.5 L935.0,400.5 L935.2,366.8 L935.5,370.6 L935.8,398.9 L936.0,400.5 L936.2,371.6 L936.5,379.0 L936.8,400.5 L937.0,400.5 L937.2,384.7 L937.5,375.6 L937.8,400.5 L938.0,400.5 L938.2,376.2 L938.5,376.7 L938.8,400.5 L939.0,400.5 L939.2,372.8 L939.5,377.8 L939.8,400.5 L940.0,400.5 L940.2,375.8 L940.5,378.5 L940.8,400.5 L941.0,400.5 L941.2,372.2 L941.5,374.0 L941.8,400.5 L942.0,400.5 L942.2,373.5 L942.5,367.5 L942.8,400.5 L943.0,400.5 L943.2,374.1 L943.5,362.3 L943.8,400.5 L944.0,400.5 L944.2,374.6 L944.5,388.8 L944.8,400.5 L945.0,400.5 L945.2,371.2 L945.5,367.6 L945.8,400.5 L946.0,400.5 L946.2,368.4 L946.5,382.4 L946.8,400.5 L947.0,400.5 L947.2,379.6 L947.5,383.0 L947.8,400.5 L948.0,400.5 L948.2,374.2 L948.5,374.3 L948.8,400.5 L949.0,400.5 L949.2,378.4 L949.5,374.8 L949.8,400.5 L950.0,400.5 L950.2,370.1 L950.5,379.3 L950.8,400.5 L951.0,400.5 L951.2,373.0 L951.5,368.7 L951.8,400.5 L952.0,400.5 L952.2,369.0 L952.5,374.3 L952.8,400.5 L953.0,400.5 L953.2,372.5 L953.5,377.7 L953.8,400.5 L954.0,400.5 L954.2,374.1 L954.5,370.0 L954.8,400.5 L955.0,400.5 L955.2,377.7 L955.5,378.8 L955.8,400.5 L956.0,400.5 L956.2,379.6 L956.5,375.9 L956.8,400.5 L957.0,400.5 L957.2,381.2 L957.5,370.6 L957.8,400.5 L958.0,400.5 L958.2,375.7 L958.5,380.1 L958.8,400.5 L959.0,400.5 L959.2,388.2 L959.5,381.0 L959.8,400.5 L960.0,400.5 L960.2,391.5 L960.5,378.6 L960.8,400.5 L961.0,400.5 L961.2,381.4 L961.5,376.7 L961.8,400.5 L962.0,400.5 L962.2,367.4 L962.5,367.9 L962.8,400.5 L963.0,400.5 L963.2,386.4 L963.5,388.5 L963.8,400.5 L964.0,400.5 L964.2,375.8 L964.5,378.9 L964.8,400.5 L965.0,400.5 L965.2,375.6 L965.5,377.7 L965.8,400.5 L966.0,400.5 L966.2,374.3 L966.5,365.6 L966.8,400.5 L967.0,400.5 L967.2,366.4 L967.5,368.3 L967.8,400.5 L968.0,400.5 L968.2,369.6 L968.5,377.4 L968.8,400.5 L969.0,400.5 L969.2,380.3 L969.5,372.6 L969.8,400.5 L970.0,400.5 L970.2,379.1 L970.5,381.5 L970.8,400.5 L971.0,400.5 L971.2,388.0 L971.5,369.8 L971.8,400.5 L972.0,400.5 L972.2,384.6 L972.5,388.2 L972.8,400.5 L973.0,400.5 L973.2,384.2 L973.5,366.4 L973.8,400.5 L974.0,400.5 L974.2,393.8 L974.5,377.6 L974.8,400.5 L975.0,400.5 L975.2,366.5 L975.5,372.3 L975.8,400.5 L976.0,400.5 L976.2,377.9 L976.5,368.8 L976.8,400.5 L977.0,400.5 L977.2,372.9 L977.5,382.1 L977.8,400.5 L978.0,400.5 L978.2,371.9 L978.5,372.7 L978.8,400.5 L979.0,400.5 L979.2,376.9 L979.5,375.7 L979.8,400.5 L980.0,400.5 L980.2,390.6 L980.5,379.1 L980.8,400.5 L981.0,400.5 L981.2,384.4 L981.5,369.5 L981.8,400.5 L982.0,400.5 L982.2,377.1 L982.5,371.9 L982.8,400.5 L983.0,400.5 L983.2,381.6 L983.5,372.3 L983.8,400.5 L984.0,400.5 L984.2,373.7 L984.5,375.4 L984.8,400.5 L985.0,400.5 L985.2,375.4 L985.5,375.2 L985.8,400.5 L986.0,400.5 L986.2,369.5 L986.5,389.2 L986.8,400.5 L987.0,400.5 L987.2,386.5 L987.5,375.6 L987.8,400.5 L988.0,400.5 L988.2,374.0 L988.5,368.7 L988.8,400.5 L989.0,400.5 L989.2,372.0 L989.5,382.9 L989.8,400.5 L990.0,400.5 L990.2,369.4 L990.5,376.7 L990.8,400.5 L991.0,400.5 L991.2,378.7 L991.5,381.9 L991.8,400.5 L992.0,400.5 L992.2,389.3 L992.5,374.1 L992.8,400.5 L993.0,400.5 L993.2,384.2 L993.5,373.6 L993.8,400.5 L994.0,400.5 L994.2,375.8 L994.5,385.9 L994.8,400.5 L995.0,400.5 L995.2,385.3 L995.5,366.7 L995.8,400.5 L996.0,400.5 L996.2,372.6 L996.5,382.3 L996.8,400.5 L997.0,400.5 L997.2,377.6 L997.5,368.3 L997.8,400.5 L998.0,400.5 L998.2,381.8 L998.5,372.1 L998.8,400.5 L999.0,400.5 L999.2,389.5 L999.5,378.4 L999.8,400.5 L1000.0,400.5 L1000.2,375.8 L1000.5,380.1 L1000.8,400.5 L1001.0,400.5 L1001.2,381.4 L1001.5,377.0 L1001.8,400.5 L1002.0,400.5 L1002.2,371.0 L1002.5,375.1 L1002.8,400.5 L1003.0,400.5 L1003.2,364.6 L1003.5,374.1 L1003.8,400.5 L1004.0,400.5 L1004.2,375.2 L1004.5,372.9 L1004.8,400.5 L1005.0,400.5 L1005.2,385.5 L1005.5,364.2 L1005.8,400.5 L1006.0,400.5 L1006.2,389.5 L1006.5,384.2 L1006.8,400.5 L1007.0,400.5 L1007.2,370.4 L1007.5,381.7 L1007.8,400.5 L1008.0,400.5 L1008.2,377.6 L1008.5,369.6 L1008.8,400.5 L1009.0,400.5 L1009.2,388.9 L1009.5,380.7 L1009.8,400.5 L1010.0,400.5 L1010.2,378.3 L1010.5,374.8 L1010.8,400.5 L1011.0,400.5 L1011.2,372.4 L1011.5,372.2 L1011.8,400.5 L1012.0,383.5 L1012.2,374.8" fill="none" stroke="#cc5a66" stroke-width="1.5" stroke-opacity="0.8" clip-path="url(#lowc)"/>
<path d="M562.0,368.0 C562.6,368.5 563.8,365.6 565.7,370.8 C567.6,376.0 571.3,396.7 573.3,399.2 C575.3,400.5 575.6,389.7 577.6,385.8 C579.6,381.9 582.3,378.8 585.0,376.0 C587.7,373.2 591.2,368.5 593.7,369.2 C596.2,369.9 598.0,379.9 600.1,380.4 C602.2,380.9 604.5,370.0 606.6,372.4 C608.8,374.8 610.7,396.4 613.0,395.0 C615.3,393.6 618.4,368.0 620.5,364.3 C622.6,360.6 624.3,371.0 625.9,373.0 C627.5,375.0 628.8,371.7 630.2,376.1 C631.6,380.5 632.4,400.5 634.5,399.2 C636.6,396.8 641.1,366.7 643.1,361.6 C645.1,356.5 644.9,362.3 646.3,368.6 C647.7,374.9 650.3,399.4 651.7,399.2 C653.1,399.0 653.8,370.9 654.9,367.6 C656.0,364.3 656.9,379.0 658.1,379.4 C659.4,379.8 661.6,370.9 662.4,369.7 C663.2,368.5 662.3,370.6 662.6,372.0 C663.0,373.4 664.0,378.7 664.7,378.1 C665.3,377.5 666.0,369.5 666.6,368.6 C667.2,367.7 667.9,370.6 668.5,372.7 C669.1,374.7 669.7,382.2 670.3,380.8 C670.9,379.4 671.5,363.6 672.1,364.2 C672.7,364.9 673.3,379.2 673.8,384.8 C674.4,390.3 675.0,394.8 675.5,397.6 C676.1,400.5 676.6,400.5 677.2,401.8 C677.7,400.5 678.3,400.5 678.8,396.7 C679.3,391.8 679.8,373.5 680.4,372.5 C680.9,371.4 681.4,389.1 681.9,390.3 C682.4,391.5 682.9,378.0 683.4,379.9 C683.9,381.8 684.4,399.2 684.9,401.8 C685.3,400.5 685.8,400.1 686.3,395.8 C686.8,391.5 687.2,380.7 687.7,376.0 C688.2,371.3 688.6,367.0 689.1,367.6 C689.5,368.1 690.0,373.5 690.4,379.2 C690.8,384.9 691.3,400.3 691.7,401.8 C692.2,400.5 692.6,392.7 693.0,388.4 C693.4,384.1 693.9,377.9 694.3,376.0 C694.7,374.1 695.1,375.6 695.5,377.2 C695.9,378.8 696.3,385.1 696.7,385.6 C697.1,386.1 697.5,379.4 697.9,380.4 C698.3,381.4 698.9,390.0 699.1,391.9 L700.0,397.0 L700.2,397.0 L701.0,379.6 L701.2,379.6 L702.5,378.2 L702.8,378.2 L703.5,380.0 L703.8,380.0 L704.5,400.5 L704.8,401.4 L705.5,369.5 L705.8,369.5 L706.5,375.8 L706.8,375.8 L707.5,395.1 L707.8,395.1 L708.5,373.3 L708.8,373.3 L709.5,372.3 L709.8,372.3 L710.5,375.5 L710.8,375.5 L711.5,379.7 L711.8,379.7 L712.5,389.8 L712.8,389.8 L713.5,371.6 L713.8,371.6 L714.5,374.0 L714.8,374.0 L715.0,385.4 L715.2,385.4 L716.0,368.8 L716.2,368.8 L717.0,387.2 L717.2,387.2 L718.0,388.7 L718.2,388.7 L718.5,381.0 L718.8,381.0 L719.5,392.1 L719.8,392.1 L720.5,386.4 L720.8,386.4 L721.5,376.9 L721.8,376.9 L722.0,388.2 L722.2,388.2 L723.0,378.0 L723.2,378.0 L723.5,386.4 L723.8,386.4 L724.5,384.3 L724.8,384.3 L725.5,384.9 L725.8,384.9 L726.0,383.6 L726.2,383.6 L727.0,372.5 L727.2,372.5 L727.5,380.1 L727.8,380.1 L728.5,379.7 L728.8,379.7 L729.0,371.8 L729.2,371.8 L729.5,371.9 L729.8,371.9 L730.0,397.2 L730.2,380.6 L730.5,376.4 L730.8,376.4 L731.0,388.6 L731.2,377.5 L731.5,394.5 L731.8,394.5 L732.0,388.1 L732.2,380.0 L732.5,377.7 L732.8,377.7 L733.0,380.5 L733.2,380.5 L733.5,376.9 L733.8,381.8 L734.0,377.2 L734.2,377.2 L734.5,382.7 L734.8,391.9 L735.0,377.6 L735.2,377.6 L735.5,368.8 L735.8,370.7 L736.0,371.1 L736.2,371.1 L736.5,380.3 L736.8,381.4 L737.0,380.3 L737.2,380.3 L737.5,383.8 L737.8,385.4 L738.0,388.8 L738.2,384.5 L738.5,385.5 L738.8,385.5 L739.0,377.1 L739.2,372.7 L739.5,374.7 L739.8,374.7 L740.0,400.5 L740.2,387.2 L740.5,393.2 L740.8,400.5 L741.0,400.5 L741.2,401.8 L741.5,395.3 L741.8,400.5 L742.0,385.1 L742.2,376.6 L742.5,376.8 L742.8,376.8 L743.0,381.2 L743.2,381.0 L743.5,371.3 L743.8,381.4 L744.0,371.2 L744.2,371.2 L744.5,379.6 L744.8,392.4 L745.0,393.0 L745.2,392.7 L745.5,379.4 L745.8,400.5 L746.0,371.6 L746.2,371.6 L746.5,377.6 L746.8,388.9 L747.0,380.0 L747.2,378.8 L747.5,375.4 L747.8,393.7 L748.0,377.3 L748.2,374.1 L748.5,375.2 L748.8,375.2 L749.0,370.2 L749.2,368.4 L749.5,372.9 L749.8,373.5 L750.0,367.4 L750.2,365.4 L750.5,373.1 L750.8,396.9 L751.0,400.5 L751.2,395.4 L751.5,375.7 L751.8,387.6 L752.0,371.0 L752.2,370.0 L752.5,379.4 L752.8,385.5 L753.0,369.6 L753.2,366.3 L753.5,369.0 L753.8,375.0 L754.0,400.5 L754.2,387.3 L754.5,378.1 L754.8,400.1 L755.0,367.1 L755.2,366.3 L755.5,377.7 L755.8,393.7 L756.0,400.5 L756.2,380.7 L756.5,383.7 L756.8,400.5 L757.0,392.8 L757.2,379.6 L757.5,377.5 L757.8,391.3 L758.0,400.5 L758.2,396.8 L758.5,384.5 L758.8,385.3 L759.0,400.5 L759.2,386.0 L759.5,372.5 L759.8,381.6 L760.0,370.6 L760.2,368.1 L760.5,381.6 L760.8,398.2 L761.0,380.1 L761.2,369.3 L761.5,365.6 L761.8,371.1 L762.0,376.3 L762.2,376.0 L762.5,382.4 L762.8,400.5 L763.0,390.0 L763.2,381.8 L763.5,379.8 L763.8,398.0 L764.0,400.5 L764.2,383.1 L764.5,390.1 L764.8,393.0 L765.0,382.5 L765.2,367.1 L765.5,371.5 L765.8,377.4 L766.0,377.1 L766.2,371.8 L766.5,378.2 L766.8,383.5 L767.0,400.5 L767.2,383.8 L767.5,378.0 L767.8,379.1 L768.0,393.9 L768.2,388.0 L768.5,365.4 L768.8,374.1 L769.0,364.0 L769.2,361.9 L769.5,366.6 L769.8,383.0 L770.0,378.5 L770.2,366.5 L770.5,372.7 L770.8,380.2 L771.0,395.0 L771.2,382.1 L771.5,378.3 L771.8,388.0 L772.0,389.6 L772.2,370.5 L772.5,378.1 L772.8,381.5 L773.0,387.4 L773.2,378.2 L773.5,398.3 L773.8,400.5 L774.0,400.5 L774.2,380.2 L774.5,378.4 L774.8,384.4 L775.0,374.0 L775.2,373.5 L775.5,367.5 L775.8,379.8 L776.0,375.5 L776.2,373.6 L776.5,372.9 L776.8,374.3 L777.0,400.5 L777.2,380.3 L777.5,376.6 L777.8,381.7 L778.0,394.9 L778.2,380.6 L778.5,366.0 L778.8,384.2 L779.0,400.5 L779.2,370.4 L779.5,361.9 L779.8,364.4 L780.0,371.2 L780.2,365.9 L780.5,377.3 L780.8,400.5 L781.0,378.0 L781.2,372.3 L781.5,368.5 L781.8,373.5 L782.0,373.8 L782.2,360.3 L782.5,362.0 L782.8,381.5 L783.0,378.8 L783.2,356.0 L783.5,367.1 L783.8,372.2 L784.0,385.6 L784.2,371.6 L784.5,360.4 L784.8,368.1 L785.0,381.9 L785.2,373.6 L785.5,365.4 L785.8,400.5 L786.0,397.0 L786.2,374.2 L786.5,364.2 L786.8,368.4 L787.0,381.4 L787.2,373.6 L787.5,396.2 L787.8,400.5 L788.0,398.7 L788.2,389.2 L788.5,377.8 L788.8,396.4 L789.0,374.1 L789.2,366.8 L789.5,368.7 L789.8,393.3 L790.0,388.6 L790.2,380.7 L790.5,365.4 L790.8,388.0 L791.0,376.8 L791.2,373.5 L791.5,383.2 L791.8,400.5 L792.0,393.8 L792.2,366.1 L792.5,363.4 L792.8,400.5 L793.0,377.1 L793.2,366.1 L793.5,360.9 L793.8,366.0 L794.0,380.6 L794.2,367.6 L794.5,367.8 L794.8,387.2 L795.0,387.6 L795.2,368.5 L795.5,367.4 L795.8,371.7 L796.0,376.1 L796.2,366.4 L796.5,362.5 L796.8,368.2 L797.0,378.0 L797.2,363.4 L797.5,360.9 L797.8,377.3 L798.0,365.4 L798.2,363.2 L798.5,364.6 L798.8,367.8 L799.0,360.3 L799.2,353.8 L799.5,359.6 L799.8,367.5 L800.0,370.5 L800.2,361.3 L800.5,347.8 L800.8,371.2 L801.0,377.2 L801.2,345.7 L801.5,356.3 L801.8,361.8 L802.0,357.1 L802.2,340.8 L802.5,340.0 L802.8,363.0 L803.0,397.5 L803.2,363.5 L803.5,356.8 L803.8,367.3 L804.0,359.4 L804.2,354.0 L804.5,344.5 L804.8,356.9 L805.0,357.8 L805.2,342.0 L805.5,347.0 L805.8,352.2 L806.0,370.8 L806.2,353.9 L806.5,356.2 L806.8,376.1 L807.0,367.3 L807.2,343.9 L807.5,337.8 L807.8,342.8 L808.0,378.2 L808.2,351.3 L808.5,353.0 L808.8,378.6 L809.0,357.9 L809.2,342.4 L809.5,346.0 L809.8,360.4 L810.0,353.1 L810.2,337.1 L810.5,337.1 L810.8,355.2 L811.0,340.7 L811.2,334.3 L811.5,341.1 L811.8,362.3 L812.0,338.6 L812.2,330.4 L812.5,339.2 L812.8,344.1 L813.0,340.3 L813.2,333.6 L813.5,328.3 L813.8,356.5 L814.0,335.7 L814.2,334.9 L814.5,336.3 L814.8,360.0 L815.0,332.2 L815.2,326.3 L815.5,333.0 L815.8,352.5 L816.0,358.5 L816.2,310.4 L816.5,52.2 L816.8,316.8 L817.0,351.4 L817.2,52.2 L817.5,320.2 L817.8,351.1 L818.0,360.7 L818.2,338.1 L818.5,327.0 L818.8,346.1 L819.0,339.4 L819.2,325.9 L819.5,336.6 L819.8,362.5 L820.0,341.5 L820.2,335.6 L820.5,347.1 L820.8,351.3 L821.0,369.0 L821.2,326.2 L821.5,328.8 L821.8,346.7 L822.0,373.4 L822.2,342.5 L822.5,341.7 L822.8,353.5 L823.0,394.5 L823.2,343.6 L823.5,348.2 L823.8,354.1 L824.0,388.6 L824.2,354.2 L824.5,355.6 L824.8,362.5 L825.0,371.4 L825.2,348.8 L825.5,344.5 L825.8,358.7 L826.0,370.2 L826.2,353.0 L826.5,354.0 L826.8,367.6 L827.0,371.4 L827.2,345.3 L827.5,368.6 L827.8,390.6 L828.0,362.1 L828.2,348.9 L828.5,357.2 L828.8,376.1 L829.0,398.4 L829.2,362.4 L829.5,366.7 L829.8,381.0 L830.0,390.5 L830.2,355.9 L830.5,356.6 L830.8,377.1 L831.0,395.6 L831.2,349.0 L831.5,356.9 L831.8,384.0 L832.0,386.6 L832.2,372.8 L832.5,350.6 L832.8,381.1 L833.0,400.5 L833.2,350.3 L833.5,353.3 L833.8,382.5 L834.0,396.7 L834.2,361.7 L834.5,368.6 L834.8,383.7 L835.0,386.1 L835.2,363.5 L835.5,362.6 L835.8,383.0 L836.0,376.6 L836.2,359.1 L836.5,364.3 L836.8,381.9 L837.0,385.8 L837.2,359.2 L837.5,381.8 L837.8,389.8 L838.0,376.3 L838.2,356.9 L838.5,361.5 L838.8,380.9 L839.0,393.0 L839.2,370.4 L839.5,368.4 L839.8,400.5 L840.0,395.1 L840.2,357.7 L840.5,371.7 L840.8,394.7 L841.0,400.5 L841.2,375.7 L841.5,369.7 L841.8,400.5 L842.0,391.8 L842.2,365.2 L842.5,367.1 L842.8,376.5 L843.0,385.7 L843.2,374.0 L843.5,372.8 L843.8,382.4 L844.0,389.3 L844.2,376.0 L844.5,371.9 L844.8,381.6 L845.0,373.7 L845.2,363.1 L845.5,361.0 L845.8,378.8 L846.0,400.5 L846.2,367.7 L846.5,372.0 L846.8,397.2 L847.0,400.5 L847.2,379.1 L847.5,358.4 L847.8,391.6 L848.0,400.5 L848.2,386.4 L848.5,365.6 L848.8,400.5 L849.0,400.5 L849.2,368.5 L849.5,367.9 L849.8,375.5 L850.0,398.3 L850.2,364.8 L850.5,364.7 L850.8,400.5 L851.0,392.5 L851.2,379.8 L851.5,372.8 L851.8,389.7 L852.0,377.4 L852.2,365.7 L852.5,367.6 L852.8,400.5 L853.0,400.5 L853.2,376.9 L853.5,376.7 L853.8,392.9 L854.0,395.8 L854.2,381.3 L854.5,380.3 L854.8,391.9 L855.0,400.5 L855.2,374.7 L855.5,366.4 L855.8,383.6 L856.0,400.5 L856.2,367.4 L856.5,372.4 L856.8,393.7 L857.0,400.5 L857.2,382.6 L857.5,370.1 L857.8,372.6 L858.0,395.5 L858.2,368.6 L858.5,380.1 L858.8,400.5 L859.0,400.5 L859.2,374.4 L859.5,369.4 L859.8,388.1 L860.0,400.5 L860.2,379.5 L860.5,393.1 L860.8,400.5 L861.0,397.6 L861.2,379.2 L861.5,378.7 L861.8,400.5 L862.0,400.5 L862.2,390.3 L862.5,370.4 L862.8,400.5 L863.0,400.5 L863.2,376.8 L863.5,374.7 L863.8,386.9 L864.0,400.5 L864.2,374.0 L864.5,371.5 L864.8,388.6 L865.0,400.5 L865.2,362.6 L865.5,378.0 L865.8,400.5 L866.0,400.5 L866.2,382.4 L866.5,376.0 L866.8,400.5 L867.0,397.7 L867.2,373.9 L867.5,370.4 L867.8,383.2 L868.0,393.3 L868.2,377.6 L868.5,374.6 L868.8,398.4 L869.0,400.5 L869.2,385.9 L869.5,380.9 L869.8,396.9 L870.0,400.5 L870.2,382.2 L870.5,380.9 L870.8,392.1 L871.0,400.5 L871.2,367.8 L871.5,378.4 L871.8,396.3 L872.0,400.5 L872.2,383.5 L872.5,380.8 L872.8,400.5 L873.0,400.5 L873.2,375.9 L873.5,373.2 L873.8,400.5 L874.0,387.8 L874.2,364.2 L874.5,367.2 L874.8,395.2 L875.0,400.5 L875.2,380.2 L875.5,372.1 L875.8,400.5 L876.0,400.5 L876.2,374.1 L876.5,371.8 L876.8,394.6 L877.0,399.3 L877.2,375.3 L877.5,371.6 L877.8,400.5 L878.0,396.6 L878.2,371.4 L878.5,380.0 L878.8,400.5 L879.0,400.5 L879.2,383.3 L879.5,372.0 L879.8,395.0 L880.0,400.5 L880.2,384.7 L880.5,379.5 L880.8,400.5 L881.0,400.5 L881.2,375.3 L881.5,374.3 L881.8,400.5 L882.0,387.1 L882.2,374.7 L882.5,370.7 L882.8,399.2 L883.0,400.5 L883.2,387.8 L883.5,374.9 L883.8,392.6 L884.0,400.5 L884.2,374.6 L884.5,367.9 L884.8,397.6 L885.0,400.5 L885.2,379.0 L885.5,368.5 L885.8,400.5 L886.0,400.5 L886.2,370.6 L886.5,396.3 L886.8,400.5 L887.0,400.5 L887.2,375.6 L887.5,374.0 L887.8,400.5 L888.0,400.5 L888.2,371.6 L888.5,372.8 L888.8,400.5 L889.0,400.5 L889.2,372.9 L889.5,375.5 L889.8,400.5 L890.0,400.5 L890.2,375.8 L890.5,381.7 L890.8,400.5 L891.0,400.5 L891.2,369.9 L891.5,376.8 L891.8,400.5 L892.0,400.5 L892.2,370.2 L892.5,382.5 L892.8,400.5 L893.0,393.5 L893.2,378.8 L893.5,374.5 L893.8,400.5 L894.0,400.5 L894.2,375.5 L894.5,376.8 L894.8,400.5 L895.0,400.5 L895.2,387.2 L895.5,371.3 L895.8,400.5 L896.0,400.5 L896.2,379.0 L896.5,370.8 L896.8,400.5 L897.0,400.5 L897.2,374.1 L897.5,383.7 L897.8,397.4 L898.0,400.5 L898.2,379.1 L898.5,379.0 L898.8,400.5 L899.0,398.1 L899.2,368.7 L899.5,372.1 L899.8,400.5 L900.0,400.5 L900.2,379.8 L900.5,373.5 L900.8,400.5 L901.0,400.5 L901.2,386.9 L901.5,374.8 L901.8,400.5 L902.0,400.5 L902.2,373.7 L902.5,376.7 L902.8,400.5 L903.0,400.5 L903.2,374.3 L903.5,377.4 L903.8,400.5 L904.0,390.4 L904.2,369.0 L904.5,364.2 L904.8,399.7 L905.0,400.5 L905.2,377.9 L905.5,372.4 L905.8,400.5 L906.0,400.5 L906.2,375.3 L906.5,376.5 L906.8,389.8 L907.0,400.5 L907.2,365.8 L907.5,371.8 L907.8,400.5 L908.0,400.5 L908.2,370.5 L908.5,383.0 L908.8,400.5 L909.0,400.5 L909.2,373.6 L909.5,382.8 L909.8,400.5 L910.0,400.5 L910.2,388.9 L910.5,370.1 L910.8,400.5 L911.0,400.5 L911.2,372.1 L911.5,365.5 L911.8,400.5 L912.0,400.5 L912.2,374.4 L912.5,371.9 L912.8,400.5 L913.0,400.5 L913.2,393.2 L913.5,372.7 L913.8,393.9 L914.0,400.5 L914.2,374.9 L914.5,373.7 L914.8,400.5 L915.0,392.4 L915.2,371.4 L915.5,374.6 L915.8,400.5 L916.0,400.5 L916.2,376.9 L916.5,370.0 L916.8,400.5 L917.0,397.0 L917.2,372.6 L917.5,375.4 L917.8,400.5 L918.0,400.5 L918.2,401.8 L918.5,389.9 L918.8,400.5 L919.0,400.2 L919.2,378.0 L919.5,374.0 L919.8,400.5 L920.0,400.5 L920.2,381.3 L920.5,379.1 L920.8,395.3 L921.0,400.5 L921.2,365.6 L921.5,370.2 L921.8,400.5 L922.0,400.5 L922.2,371.0 L922.5,384.7 L922.8,400.5 L923.0,400.5 L923.2,381.5 L923.5,376.9 L923.8,400.5 L924.0,400.5 L924.2,390.5 L924.5,363.9 L924.8,400.5 L925.0,400.5 L925.2,381.2 L925.5,378.5 L925.8,400.5 L926.0,399.9 L926.2,368.6 L926.5,376.0 L926.8,400.5 L927.0,400.5 L927.2,370.9 L927.5,384.1 L927.8,400.5 L928.0,400.5 L928.2,373.6 L928.5,375.2 L928.8,399.2 L929.0,400.5 L929.2,374.3 L929.5,384.5 L929.8,400.5 L930.0,397.4 L930.2,375.0 L930.5,368.0 L930.8,400.5 L931.0,400.0 L931.2,371.1 L931.5,374.1 L931.8,400.5 L932.0,400.5 L932.2,388.3 L932.5,365.9 L932.8,400.5 L933.0,393.9 L933.2,384.4 L933.5,388.8 L933.8,400.5 L934.0,400.5 L934.2,392.5 L934.5,376.9 L934.8,400.5 L935.0,400.5 L935.2,379.9 L935.5,376.6 L935.8,400.5 L936.0,400.5 L936.2,379.3 L936.5,369.6 L936.8,400.5 L937.0,400.5 L937.2,376.5 L937.5,381.7 L937.8,400.5 L938.0,400.5 L938.2,380.0 L938.5,378.8 L938.8,400.5 L939.0,400.5 L939.2,377.5 L939.5,368.9 L939.8,399.5 L940.0,400.5 L940.2,361.0 L940.5,374.2 L940.8,400.5 L941.0,400.5 L941.2,377.3 L941.5,377.4 L941.8,399.5 L942.0,400.5 L942.2,379.3 L942.5,389.8 L942.8,400.5 L943.0,400.5 L943.2,387.7 L943.5,391.1 L943.8,400.5 L944.0,400.5 L944.2,372.4 L944.5,373.0 L944.8,400.0 L945.0,400.5 L945.2,373.4 L945.5,377.4 L945.8,398.7 L946.0,400.5 L946.2,368.8 L946.5,378.5 L946.8,400.5 L947.0,400.5 L947.2,375.8 L947.5,368.1 L947.8,400.5 L948.0,400.5 L948.2,367.9 L948.5,384.6 L948.8,400.5 L949.0,400.5 L949.2,377.7 L949.5,381.4 L949.8,400.5 L950.0,400.5 L950.2,383.9 L950.5,374.7 L950.8,400.5 L951.0,400.5 L951.2,369.5 L951.5,372.6 L951.8,400.5 L952.0,400.5 L952.2,380.9 L952.5,377.9 L952.8,400.5 L953.0,400.5 L953.2,374.3 L953.5,375.5 L953.8,400.5 L954.0,400.5 L954.2,384.9 L954.5,368.2 L954.8,400.5 L955.0,398.2 L955.2,370.3 L955.5,377.9 L955.8,400.5 L956.0,400.5 L956.2,368.4 L956.5,376.5 L956.8,400.5 L957.0,400.5 L957.2,381.6 L957.5,373.3 L957.8,400.5 L958.0,400.5 L958.2,373.8 L958.5,369.1 L958.8,400.1 L959.0,400.5 L959.2,386.8 L959.5,368.4 L959.8,400.5 L960.0,400.5 L960.2,375.3 L960.5,379.3 L960.8,400.5 L961.0,400.5 L961.2,385.3 L961.5,385.8 L961.8,400.5 L962.0,400.5 L962.2,379.8 L962.5,377.5 L962.8,400.5 L963.0,400.5 L963.2,375.0 L963.5,367.5 L963.8,400.5 L964.0,400.5 L964.2,381.7 L964.5,369.4 L964.8,400.5 L965.0,400.5 L965.2,370.1 L965.5,376.9 L965.8,400.5 L966.0,400.5 L966.2,366.9 L966.5,374.5 L966.8,400.5 L967.0,400.5 L967.2,376.4 L967.5,374.0 L967.8,400.5 L968.0,400.5 L968.2,374.9 L968.5,376.4 L968.8,400.5 L969.0,400.5 L969.2,376.1 L969.5,372.4 L969.8,400.5 L970.0,400.5 L970.2,362.9 L970.5,375.8 L970.8,400.5 L971.0,400.5 L971.2,385.6 L971.5,373.7 L971.8,400.5 L972.0,400.5 L972.2,369.2 L972.5,382.2 L972.8,400.5 L973.0,400.5 L973.2,370.5 L973.5,378.2 L973.8,400.5 L974.0,400.5 L974.2,379.3 L974.5,374.1 L974.8,400.5 L975.0,400.5 L975.2,364.3 L975.5,375.8 L975.8,400.5 L976.0,400.5 L976.2,385.2 L976.5,381.9 L976.8,400.5 L977.0,400.5 L977.2,373.9 L977.5,375.8 L977.8,400.5 L978.0,400.5 L978.2,382.9 L978.5,371.9 L978.8,400.5 L979.0,400.5 L979.2,375.6 L979.5,376.1 L979.8,400.5 L980.0,400.5 L980.2,364.5 L980.5,372.0 L980.8,400.5 L981.0,400.5 L981.2,384.0 L981.5,379.7 L981.8,400.5 L982.0,400.5 L982.2,368.1 L982.5,383.1 L982.8,400.5 L983.0,400.5 L983.2,373.9 L983.5,386.3 L983.8,400.5 L984.0,400.5 L984.2,373.9 L984.5,383.6 L984.8,400.5 L985.0,400.5 L985.2,377.6 L985.5,376.9 L985.8,400.5 L986.0,400.5 L986.2,383.2 L986.5,369.8 L986.8,400.5 L987.0,400.5 L987.2,373.0 L987.5,371.2 L987.8,400.5 L988.0,400.5 L988.2,377.4 L988.5,391.9 L988.8,400.5 L989.0,400.5 L989.2,363.1 L989.5,378.9 L989.8,400.5 L990.0,400.5 L990.2,380.2 L990.5,381.1 L990.8,400.5 L991.0,400.5 L991.2,384.7 L991.5,374.2 L991.8,400.5 L992.0,400.5 L992.2,385.7 L992.5,382.2 L992.8,400.5 L993.0,400.5 L993.2,367.6 L993.5,388.0 L993.8,400.5 L994.0,400.5 L994.2,380.1 L994.5,367.7 L994.8,400.5 L995.0,400.5 L995.2,368.8 L995.5,380.4 L995.8,400.5 L996.0,400.5 L996.2,387.8 L996.5,382.6 L996.8,400.5 L997.0,400.5 L997.2,372.1 L997.5,371.5 L997.8,400.5 L998.0,400.5 L998.2,373.7 L998.5,368.8 L998.8,400.5 L999.0,400.5 L999.2,383.9 L999.5,383.2 L999.8,400.5 L1000.0,400.5 L1000.2,368.8 L1000.5,378.3 L1000.8,400.5 L1001.0,400.5 L1001.2,373.8 L1001.5,367.8 L1001.8,400.5 L1002.0,400.5 L1002.2,381.0 L1002.5,380.8 L1002.8,400.5 L1003.0,400.5 L1003.2,400.5 L1003.5,366.8 L1003.8,400.5 L1004.0,400.5 L1004.2,382.3 L1004.5,374.2 L1004.8,400.5 L1005.0,400.5 L1005.2,368.9 L1005.5,378.5 L1005.8,400.5 L1006.0,400.5 L1006.2,371.6 L1006.5,368.6 L1006.8,400.5 L1007.0,400.5 L1007.2,384.0 L1007.5,371.0 L1007.8,400.5 L1008.0,400.5 L1008.2,381.0 L1008.5,374.1 L1008.8,400.5 L1009.0,400.5 L1009.2,371.3 L1009.5,368.8 L1009.8,400.5 L1010.0,400.5 L1010.2,380.2 L1010.5,374.1 L1010.8,400.5 L1011.0,400.5 L1011.2,375.7 L1011.5,376.0 L1011.8,400.5 L1012.0,387.0 L1012.2,368.7" fill="none" stroke="#5a78b4" stroke-width="1" stroke-opacity="0.75" clip-path="url(#highc)"/>
<path d="M562.0,368.6 C562.8,369.0 564.4,367.7 566.8,370.8 C569.2,373.9 574.2,386.5 576.5,387.4 C578.8,388.3 579.2,378.2 580.8,376.0 C582.4,373.8 583.8,375.3 586.1,374.0 C588.4,372.7 591.8,370.2 594.7,368.1 C597.6,366.0 600.2,362.5 603.3,361.6 C606.3,360.7 610.4,359.4 613.0,362.7 C615.6,366.0 617.3,380.0 618.9,381.5 C620.5,383.0 621.0,375.6 622.7,371.9 C624.4,368.1 627.5,360.6 629.1,359.0 C630.7,357.4 631.2,358.4 632.3,362.2 C633.4,365.9 634.2,379.4 635.6,381.5 C637.0,383.6 639.5,377.3 640.9,375.0 C642.3,372.7 642.8,365.4 644.1,367.6 C645.4,369.8 647.1,388.4 648.5,388.0 C649.9,387.6 651.3,366.8 652.7,365.4 C654.1,364.0 655.6,374.8 657.0,379.4 C658.4,384.0 660.0,394.2 661.3,393.3 C662.6,392.4 664.1,374.1 665.0,374.0 C665.9,373.9 666.0,389.5 666.6,392.5 C667.2,395.6 667.9,394.3 668.5,392.1 C669.1,390.0 669.7,377.9 670.3,379.5 C670.9,381.1 671.5,400.5 672.1,401.8 C672.7,400.5 673.3,382.3 673.8,377.5 C674.4,372.6 675.0,374.1 675.5,372.9 C676.1,371.8 676.6,368.6 677.2,370.5 C677.7,372.4 678.3,385.5 678.8,384.4 C679.3,383.2 679.8,363.8 680.4,363.8 C680.9,363.8 681.4,378.3 681.9,384.3 C682.4,390.4 682.9,400.5 683.4,399.9 C683.9,399.0 684.4,382.1 684.9,378.7 C685.3,375.4 685.8,380.1 686.3,379.8 C686.8,379.6 687.2,374.0 687.7,377.1 C688.2,380.2 688.6,397.8 689.1,398.5 C689.5,399.2 690.0,385.9 690.4,381.5 C690.8,377.0 691.3,371.8 691.7,371.7 C692.2,371.6 692.6,378.7 693.0,380.9 C693.4,383.1 693.9,385.8 694.3,385.0 C694.7,384.1 695.1,373.1 695.5,375.8 C695.9,378.6 696.3,400.5 696.7,401.5 C697.1,400.5 697.5,378.5 697.9,374.9 C698.3,371.3 698.9,379.1 699.1,379.9 L700.0,370.4 L700.2,370.4 L701.0,386.1 L701.2,386.1 L702.5,380.7 L702.8,380.7 L703.5,387.6 L703.8,387.6 L704.5,396.1 L704.8,396.1 L705.5,390.3 L705.8,390.3 L706.5,400.5 L706.8,401.8 L707.5,387.5 L707.8,387.5 L708.5,366.8 L708.8,366.8 L709.5,373.1 L709.8,373.1 L710.5,400.0 L710.8,400.0 L711.5,393.2 L711.8,393.2 L712.5,371.7 L712.8,371.7 L713.5,401.8 L713.8,400.5 L714.5,392.9 L714.8,392.9 L715.0,386.6 L715.2,386.6 L716.0,374.1 L716.2,374.1 L717.0,370.7 L717.2,370.7 L718.0,384.7 L718.2,384.7 L718.5,387.2 L718.8,387.2 L719.5,392.0 L719.8,392.0 L720.5,388.1 L720.8,388.1 L721.5,394.7 L721.8,394.7 L722.0,381.1 L722.2,381.1 L723.0,391.5 L723.2,391.5 L723.5,376.9 L723.8,376.9 L724.5,377.5 L724.8,377.5 L725.5,397.8 L725.8,397.8 L726.0,385.1 L726.2,385.1 L727.0,376.2 L727.2,376.2 L727.5,400.0 L727.8,400.0 L728.5,394.1 L728.8,394.1 L729.0,381.3 L729.2,381.3 L729.5,375.4 L729.8,375.4 L730.0,393.9 L730.2,380.8 L730.5,381.2 L730.8,381.2 L731.0,380.7 L731.2,376.6 L731.5,386.6 L731.8,386.6 L732.0,400.5 L732.2,392.7 L732.5,388.9 L732.8,388.9 L733.0,397.4 L733.2,397.4 L733.5,393.8 L733.8,400.5 L734.0,380.5 L734.2,380.5 L734.5,371.9 L734.8,372.2 L735.0,381.3 L735.2,381.3 L735.5,376.1 L735.8,378.7 L736.0,379.9 L736.2,379.9 L736.5,390.1 L736.8,393.9 L737.0,373.5 L737.2,373.5 L737.5,368.6 L737.8,373.1 L738.0,400.5 L738.2,365.8 L738.5,360.1 L738.8,360.1 L739.0,373.1 L739.2,364.5 L739.5,390.6 L739.8,390.6 L740.0,400.5 L740.2,401.8 L740.5,387.0 L740.8,392.7 L741.0,376.5 L741.2,376.5 L741.5,371.4 L741.8,375.0 L742.0,381.4 L742.2,373.0 L742.5,388.9 L742.8,388.9 L743.0,389.9 L743.2,384.7 L743.5,367.5 L743.8,379.1 L744.0,369.3 L744.2,369.3 L744.5,378.2 L744.8,378.6 L745.0,375.7 L745.2,373.6 L745.5,380.2 L745.8,380.3 L746.0,391.0 L746.2,391.0 L746.5,399.9 L746.8,400.5 L747.0,383.0 L747.2,371.6 L747.5,366.9 L747.8,368.9 L748.0,390.8 L748.2,383.7 L748.5,387.7 L748.8,387.7 L749.0,380.7 L749.2,368.2 L749.5,364.0 L749.8,365.9 L750.0,390.9 L750.2,372.5 L750.5,401.6 L750.8,400.5 L751.0,393.5 L751.2,387.9 L751.5,378.7 L751.8,384.8 L752.0,380.5 L752.2,379.0 L752.5,376.6 L752.8,378.2 L753.0,395.5 L753.2,383.7 L753.5,374.9 L753.8,382.4 L754.0,387.9 L754.2,374.6 L754.5,376.5 L754.8,381.2 L755.0,389.3 L755.2,382.0 L755.5,370.1 L755.8,376.0 L756.0,393.1 L756.2,373.9 L756.5,383.5 L756.8,400.5 L757.0,378.6 L757.2,377.8 L757.5,380.6 L757.8,380.9 L758.0,375.1 L758.2,371.9 L758.5,374.5 L758.8,379.3 L759.0,383.9 L759.2,367.3 L759.5,375.2 L759.8,385.4 L760.0,379.5 L760.2,379.0 L760.5,384.3 L760.8,386.9 L761.0,383.9 L761.2,377.5 L761.5,371.7 L761.8,381.1 L762.0,375.4 L762.2,368.7 L762.5,369.0 L762.8,373.8 L763.0,387.8 L763.2,385.5 L763.5,372.4 L763.8,399.3 L764.0,377.7 L764.2,373.5 L764.5,379.9 L764.8,396.2 L765.0,400.5 L765.2,396.5 L765.5,380.4 L765.8,382.5 L766.0,396.9 L766.2,374.3 L766.5,374.4 L766.8,380.3 L767.0,377.1 L767.2,365.7 L767.5,368.1 L767.8,376.9 L768.0,400.5 L768.2,381.8 L768.5,383.2 L768.8,391.9 L769.0,400.5 L769.2,385.0 L769.5,386.7 L769.8,400.5 L770.0,391.2 L770.2,376.1 L770.5,365.0 L770.8,367.2 L771.0,381.6 L771.2,375.6 L771.5,375.2 L771.8,381.5 L772.0,393.1 L772.2,374.4 L772.5,374.6 L772.8,376.4 L773.0,386.8 L773.2,382.6 L773.5,378.6 L773.8,387.2 L774.0,379.8 L774.2,376.5 L774.5,374.2 L774.8,378.0 L775.0,382.6 L775.2,374.1 L775.5,372.0 L775.8,398.9 L776.0,366.6 L776.2,358.6 L776.5,360.5 L776.8,378.2 L777.0,374.2 L777.2,368.9 L777.5,362.4 L777.8,392.5 L778.0,371.1 L778.2,366.1 L778.5,381.3 L778.8,397.0 L779.0,399.6 L779.2,373.9 L779.5,369.2 L779.8,375.8 L780.0,383.4 L780.2,371.5 L780.5,374.9 L780.8,395.9 L781.0,388.7 L781.2,378.0 L781.5,368.9 L781.8,385.4 L782.0,400.5 L782.2,389.6 L782.5,371.4 L782.8,396.5 L783.0,400.5 L783.2,364.0 L783.5,374.1 L783.8,397.2 L784.0,378.3 L784.2,369.9 L784.5,374.9 L784.8,395.2 L785.0,373.1 L785.2,370.2 L785.5,365.3 L785.8,375.9 L786.0,386.7 L786.2,377.3 L786.5,367.4 L786.8,375.2 L787.0,399.4 L787.2,364.7 L787.5,371.3 L787.8,386.7 L788.0,384.5 L788.2,372.2 L788.5,377.5 L788.8,384.4 L789.0,399.1 L789.2,382.7 L789.5,370.3 L789.8,378.8 L790.0,389.9 L790.2,383.2 L790.5,375.4 L790.8,393.5 L791.0,390.7 L791.2,370.2 L791.5,368.3 L791.8,378.8 L792.0,385.9 L792.2,381.5 L792.5,353.6 L792.8,366.1 L793.0,385.0 L793.2,359.1 L793.5,357.1 L793.8,361.8 L794.0,382.6 L794.2,362.0 L794.5,363.4 L794.8,371.2 L795.0,376.4 L795.2,368.9 L795.5,366.9 L795.8,380.5 L796.0,379.9 L796.2,357.5 L796.5,353.1 L796.8,358.2 L797.0,361.6 L797.2,351.0 L797.5,354.2 L797.8,384.6 L798.0,386.1 L798.2,375.5 L798.5,361.4 L798.8,377.1 L799.0,365.7 L799.2,357.9 L799.5,360.7 L799.8,378.9 L800.0,382.9 L800.2,358.5 L800.5,359.1 L800.8,368.9 L801.0,380.6 L801.2,353.9 L801.5,352.5 L801.8,362.1 L802.0,364.0 L802.2,351.4 L802.5,364.0 L802.8,400.4 L803.0,382.6 L803.2,348.4 L803.5,348.3 L803.8,364.8 L804.0,361.3 L804.2,360.0 L804.5,342.1 L804.8,351.0 L805.0,350.8 L805.2,347.6 L805.5,351.4 L805.8,361.2 L806.0,368.7 L806.2,356.6 L806.5,346.1 L806.8,366.8 L807.0,372.9 L807.2,349.9 L807.5,366.7 L807.8,368.4 L808.0,352.0 L808.2,339.7 L808.5,349.8 L808.8,373.3 L809.0,378.8 L809.2,362.6 L809.5,336.2 L809.8,382.1 L810.0,377.2 L810.2,352.3 L810.5,331.6 L810.8,389.9 L811.0,338.9 L811.2,334.1 L811.5,342.3 L811.8,358.2 L812.0,361.3 L812.2,334.2 L812.5,337.9 L812.8,352.1 L813.0,354.1 L813.2,336.1 L813.5,339.4 L813.8,352.9 L814.0,356.5 L814.2,332.9 L814.5,324.8 L814.8,338.6 L815.0,343.3 L815.2,325.2 L815.5,320.8 L815.8,323.7 L816.0,355.2 L816.2,329.0 L816.5,51.6 L816.8,333.2 L817.0,340.9 L817.2,51.6 L817.5,331.1 L817.8,337.0 L818.0,360.8 L818.2,329.9 L818.5,319.6 L818.8,332.2 L819.0,371.1 L819.2,342.8 L819.5,340.9 L819.8,355.6 L820.0,339.8 L820.2,332.2 L820.5,343.7 L820.8,355.0 L821.0,357.0 L821.2,331.7 L821.5,336.2 L821.8,339.1 L822.0,356.0 L822.2,332.5 L822.5,345.9 L822.8,353.6 L823.0,390.9 L823.2,362.1 L823.5,354.0 L823.8,379.1 L824.0,370.8 L824.2,338.7 L824.5,368.0 L824.8,380.4 L825.0,368.5 L825.2,346.1 L825.5,352.6 L825.8,360.0 L826.0,366.9 L826.2,351.2 L826.5,354.1 L826.8,389.5 L827.0,366.4 L827.2,344.9 L827.5,345.5 L827.8,362.0 L828.0,380.4 L828.2,347.8 L828.5,355.3 L828.8,388.7 L829.0,354.2 L829.2,348.1 L829.5,358.2 L829.8,378.6 L830.0,369.6 L830.2,363.1 L830.5,366.0 L830.8,386.2 L831.0,400.5 L831.2,360.1 L831.5,362.1 L831.8,371.7 L832.0,378.2 L832.2,367.3 L832.5,349.3 L832.8,359.5 L833.0,393.8 L833.2,356.7 L833.5,352.4 L833.8,386.5 L834.0,379.8 L834.2,360.5 L834.5,356.6 L834.8,399.2 L835.0,380.6 L835.2,355.0 L835.5,354.8 L835.8,389.4 L836.0,396.5 L836.2,364.3 L836.5,377.6 L836.8,389.4 L837.0,377.7 L837.2,368.2 L837.5,363.9 L837.8,383.5 L838.0,376.7 L838.2,367.5 L838.5,376.8 L838.8,388.7 L839.0,382.4 L839.2,362.4 L839.5,361.2 L839.8,400.5 L840.0,386.9 L840.2,370.5 L840.5,359.0 L840.8,392.9 L841.0,391.6 L841.2,362.5 L841.5,363.8 L841.8,385.4 L842.0,400.5 L842.2,380.9 L842.5,363.2 L842.8,384.8 L843.0,400.5 L843.2,375.9 L843.5,362.1 L843.8,400.5 L844.0,389.2 L844.2,370.3 L844.5,363.7 L844.8,377.6 L845.0,393.9 L845.2,376.5 L845.5,369.7 L845.8,385.0 L846.0,395.0 L846.2,377.1 L846.5,358.2 L846.8,380.1 L847.0,383.0 L847.2,363.4 L847.5,372.2 L847.8,385.9 L848.0,398.9 L848.2,364.2 L848.5,370.2 L848.8,394.8 L849.0,398.2 L849.2,368.6 L849.5,369.3 L849.8,391.3 L850.0,400.5 L850.2,382.5 L850.5,382.6 L850.8,397.0 L851.0,400.5 L851.2,385.3 L851.5,373.7 L851.8,400.5 L852.0,398.0 L852.2,386.7 L852.5,370.2 L852.8,400.5 L853.0,396.1 L853.2,365.4 L853.5,365.8 L853.8,388.6 L854.0,398.8 L854.2,367.6 L854.5,371.3 L854.8,395.4 L855.0,400.5 L855.2,377.4 L855.5,365.0 L855.8,391.0 L856.0,400.5 L856.2,373.3 L856.5,376.5 L856.8,399.0 L857.0,397.1 L857.2,366.7 L857.5,376.4 L857.8,400.5 L858.0,400.5 L858.2,366.9 L858.5,374.4 L858.8,394.8 L859.0,391.3 L859.2,358.9 L859.5,380.7 L859.8,400.5 L860.0,397.9 L860.2,376.9 L860.5,370.1 L860.8,400.5 L861.0,400.5 L861.2,368.5 L861.5,376.4 L861.8,399.3 L862.0,391.3 L862.2,373.7 L862.5,372.1 L862.8,388.7 L863.0,400.5 L863.2,367.3 L863.5,379.2 L863.8,398.0 L864.0,394.5 L864.2,381.7 L864.5,380.4 L864.8,400.5 L865.0,396.2 L865.2,371.9 L865.5,378.5 L865.8,385.0 L866.0,400.5 L866.2,383.2 L866.5,379.4 L866.8,395.7 L867.0,396.0 L867.2,378.6 L867.5,380.3 L867.8,400.5 L868.0,400.5 L868.2,370.9 L868.5,378.0 L868.8,400.5 L869.0,400.5 L869.2,369.0 L869.5,373.3 L869.8,400.5 L870.0,399.7 L870.2,368.5 L870.5,371.4 L870.8,400.5 L871.0,400.5 L871.2,375.9 L871.5,366.7 L871.8,392.4 L872.0,400.5 L872.2,369.4 L872.5,370.3 L872.8,384.5 L873.0,400.5 L873.2,381.5 L873.5,374.4 L873.8,400.5 L874.0,399.7 L874.2,373.0 L874.5,372.8 L874.8,400.5 L875.0,400.5 L875.2,369.6 L875.5,377.1 L875.8,388.0 L876.0,400.5 L876.2,372.2 L876.5,373.0 L876.8,400.5 L877.0,400.5 L877.2,377.6 L877.5,379.9 L877.8,400.5 L878.0,400.5 L878.2,364.3 L878.5,376.7 L878.8,400.2 L879.0,381.9 L879.2,360.5 L879.5,370.3 L879.8,384.1 L880.0,391.6 L880.2,371.2 L880.5,373.0 L880.8,384.6 L881.0,396.7 L881.2,370.1 L881.5,394.2 L881.8,400.5 L882.0,392.4 L882.2,370.6 L882.5,381.0 L882.8,389.6 L883.0,400.5 L883.2,384.0 L883.5,372.7 L883.8,400.5 L884.0,400.5 L884.2,377.2 L884.5,373.5 L884.8,400.5 L885.0,391.3 L885.2,370.6 L885.5,375.6 L885.8,397.1 L886.0,400.5 L886.2,369.8 L886.5,379.6 L886.8,399.1 L887.0,400.5 L887.2,380.5 L887.5,377.2 L887.8,400.5 L888.0,400.5 L888.2,380.3 L888.5,379.2 L888.8,400.5 L889.0,400.5 L889.2,378.2 L889.5,371.0 L889.8,399.4 L890.0,384.3 L890.2,364.8 L890.5,367.8 L890.8,398.4 L891.0,400.5 L891.2,377.7 L891.5,374.1 L891.8,393.7 L892.0,400.5 L892.2,377.1 L892.5,364.4 L892.8,400.5 L893.0,400.5 L893.2,369.1 L893.5,366.8 L893.8,400.5 L894.0,399.7 L894.2,373.8 L894.5,370.0 L894.8,400.5 L895.0,400.5 L895.2,373.0 L895.5,377.5 L895.8,400.5 L896.0,400.5 L896.2,380.6 L896.5,384.2 L896.8,400.5 L897.0,400.5 L897.2,382.3 L897.5,382.3 L897.8,400.5 L898.0,400.5 L898.2,367.5 L898.5,381.9 L898.8,400.5 L899.0,400.5 L899.2,388.7 L899.5,373.6 L899.8,400.5 L900.0,400.5 L900.2,381.8 L900.5,370.8 L900.8,400.5 L901.0,400.5 L901.2,379.2 L901.5,373.6 L901.8,396.5 L902.0,397.9 L902.2,371.5 L902.5,379.4 L902.8,400.5 L903.0,400.5 L903.2,371.5 L903.5,371.1 L903.8,400.5 L904.0,396.6 L904.2,385.5 L904.5,385.6 L904.8,400.5 L905.0,400.5 L905.2,368.7 L905.5,381.9 L905.8,400.5 L906.0,394.2 L906.2,376.8 L906.5,378.2 L906.8,400.5 L907.0,400.5 L907.2,368.5 L907.5,377.8 L907.8,400.5 L908.0,400.5 L908.2,372.9 L908.5,373.4 L908.8,400.5 L909.0,400.5 L909.2,382.8 L909.5,368.2 L909.8,400.5 L910.0,400.5 L910.2,365.0 L910.5,380.7 L910.8,400.5 L911.0,400.5 L911.2,384.0 L911.5,373.7 L911.8,400.5 L912.0,400.5 L912.2,384.5 L912.5,373.2 L912.8,400.5 L913.0,400.5 L913.2,378.7 L913.5,375.0 L913.8,400.5 L914.0,400.5 L914.2,371.9 L914.5,378.8 L914.8,400.5 L915.0,400.5 L915.2,374.9 L915.5,371.3 L915.8,400.5 L916.0,400.5 L916.2,374.7 L916.5,377.1 L916.8,396.4 L917.0,400.5 L917.2,380.4 L917.5,370.6 L917.8,400.5 L918.0,400.5 L918.2,382.8 L918.5,372.9 L918.8,399.4 L919.0,400.5 L919.2,371.1 L919.5,368.9 L919.8,400.5 L920.0,400.5 L920.2,366.1 L920.5,368.0 L920.8,400.5 L921.0,400.5 L921.2,370.2 L921.5,378.5 L921.8,400.5 L922.0,400.5 L922.2,368.3 L922.5,377.8 L922.8,400.5 L923.0,400.5 L923.2,376.6 L923.5,380.3 L923.8,400.5 L924.0,397.9 L924.2,373.3 L924.5,384.1 L924.8,400.5 L925.0,400.5 L925.2,376.3 L925.5,376.2 L925.8,400.5 L926.0,400.5 L926.2,383.8 L926.5,368.1 L926.8,400.5 L927.0,397.5 L927.2,372.5 L927.5,386.9 L927.8,400.5 L928.0,400.5 L928.2,375.5 L928.5,374.5 L928.8,400.5 L929.0,399.9 L929.2,372.6 L929.5,381.3 L929.8,400.5 L930.0,400.5 L930.2,364.5 L930.5,374.4 L930.8,399.5 L931.0,400.5 L931.2,376.8 L931.5,367.9 L931.8,400.5 L932.0,400.5 L932.2,373.2 L932.5,365.9 L932.8,400.5 L933.0,400.5 L933.2,375.4 L933.5,368.4 L933.8,400.5 L934.0,400.5 L934.2,372.5 L934.5,362.9 L934.8,400.5 L935.0,400.5 L935.2,366.8 L935.5,370.6 L935.8,398.9 L936.0,400.5 L936.2,371.6 L936.5,379.0 L936.8,400.5 L937.0,400.5 L937.2,384.7 L937.5,375.6 L937.8,400.5 L938.0,400.5 L938.2,376.2 L938.5,376.7 L938.8,400.5 L939.0,400.5 L939.2,372.8 L939.5,377.8 L939.8,400.5 L940.0,400.5 L940.2,375.8 L940.5,378.5 L940.8,400.5 L941.0,400.5 L941.2,372.2 L941.5,374.0 L941.8,400.5 L942.0,400.5 L942.2,373.5 L942.5,367.5 L942.8,400.5 L943.0,400.5 L943.2,374.1 L943.5,362.3 L943.8,400.5 L944.0,400.5 L944.2,374.6 L944.5,388.8 L944.8,400.5 L945.0,400.5 L945.2,371.2 L945.5,367.6 L945.8,400.5 L946.0,400.5 L946.2,368.4 L946.5,382.4 L946.8,400.5 L947.0,400.5 L947.2,379.6 L947.5,383.0 L947.8,400.5 L948.0,400.5 L948.2,374.2 L948.5,374.3 L948.8,400.5 L949.0,400.5 L949.2,378.4 L949.5,374.8 L949.8,400.5 L950.0,400.5 L950.2,370.1 L950.5,379.3 L950.8,400.5 L951.0,400.5 L951.2,373.0 L951.5,368.7 L951.8,400.5 L952.0,400.5 L952.2,369.0 L952.5,374.3 L952.8,400.5 L953.0,400.5 L953.2,372.5 L953.5,377.7 L953.8,400.5 L954.0,400.5 L954.2,374.1 L954.5,370.0 L954.8,400.5 L955.0,400.5 L955.2,377.7 L955.5,378.8 L955.8,400.5 L956.0,400.5 L956.2,379.6 L956.5,375.9 L956.8,400.5 L957.0,400.5 L957.2,381.2 L957.5,370.6 L957.8,400.5 L958.0,400.5 L958.2,375.7 L958.5,380.1 L958.8,400.5 L959.0,400.5 L959.2,388.2 L959.5,381.0 L959.8,400.5 L960.0,400.5 L960.2,391.5 L960.5,378.6 L960.8,400.5 L961.0,400.5 L961.2,381.4 L961.5,376.7 L961.8,400.5 L962.0,400.5 L962.2,367.4 L962.5,367.9 L962.8,400.5 L963.0,400.5 L963.2,386.4 L963.5,388.5 L963.8,400.5 L964.0,400.5 L964.2,375.8 L964.5,378.9 L964.8,400.5 L965.0,400.5 L965.2,375.6 L965.5,377.7 L965.8,400.5 L966.0,400.5 L966.2,374.3 L966.5,365.6 L966.8,400.5 L967.0,400.5 L967.2,366.4 L967.5,368.3 L967.8,400.5 L968.0,400.5 L968.2,369.6 L968.5,377.4 L968.8,400.5 L969.0,400.5 L969.2,380.3 L969.5,372.6 L969.8,400.5 L970.0,400.5 L970.2,379.1 L970.5,381.5 L970.8,400.5 L971.0,400.5 L971.2,388.0 L971.5,369.8 L971.8,400.5 L972.0,400.5 L972.2,384.6 L972.5,388.2 L972.8,400.5 L973.0,400.5 L973.2,384.2 L973.5,366.4 L973.8,400.5 L974.0,400.5 L974.2,393.8 L974.5,377.6 L974.8,400.5 L975.0,400.5 L975.2,366.5 L975.5,372.3 L975.8,400.5 L976.0,400.5 L976.2,377.9 L976.5,368.8 L976.8,400.5 L977.0,400.5 L977.2,372.9 L977.5,382.1 L977.8,400.5 L978.0,400.5 L978.2,371.9 L978.5,372.7 L978.8,400.5 L979.0,400.5 L979.2,376.9 L979.5,375.7 L979.8,400.5 L980.0,400.5 L980.2,390.6 L980.5,379.1 L980.8,400.5 L981.0,400.5 L981.2,384.4 L981.5,369.5 L981.8,400.5 L982.0,400.5 L982.2,377.1 L982.5,371.9 L982.8,400.5 L983.0,400.5 L983.2,381.6 L983.5,372.3 L983.8,400.5 L984.0,400.5 L984.2,373.7 L984.5,375.4 L984.8,400.5 L985.0,400.5 L985.2,375.4 L985.5,375.2 L985.8,400.5 L986.0,400.5 L986.2,369.5 L986.5,389.2 L986.8,400.5 L987.0,400.5 L987.2,386.5 L987.5,375.6 L987.8,400.5 L988.0,400.5 L988.2,374.0 L988.5,368.7 L988.8,400.5 L989.0,400.5 L989.2,372.0 L989.5,382.9 L989.8,400.5 L990.0,400.5 L990.2,369.4 L990.5,376.7 L990.8,400.5 L991.0,400.5 L991.2,378.7 L991.5,381.9 L991.8,400.5 L992.0,400.5 L992.2,389.3 L992.5,374.1 L992.8,400.5 L993.0,400.5 L993.2,384.2 L993.5,373.6 L993.8,400.5 L994.0,400.5 L994.2,375.8 L994.5,385.9 L994.8,400.5 L995.0,400.5 L995.2,385.3 L995.5,366.7 L995.8,400.5 L996.0,400.5 L996.2,372.6 L996.5,382.3 L996.8,400.5 L997.0,400.5 L997.2,377.6 L997.5,368.3 L997.8,400.5 L998.0,400.5 L998.2,381.8 L998.5,372.1 L998.8,400.5 L999.0,400.5 L999.2,389.5 L999.5,378.4 L999.8,400.5 L1000.0,400.5 L1000.2,375.8 L1000.5,380.1 L1000.8,400.5 L1001.0,400.5 L1001.2,381.4 L1001.5,377.0 L1001.8,400.5 L1002.0,400.5 L1002.2,371.0 L1002.5,375.1 L1002.8,400.5 L1003.0,400.5 L1003.2,364.6 L1003.5,374.1 L1003.8,400.5 L1004.0,400.5 L1004.2,375.2 L1004.5,372.9 L1004.8,400.5 L1005.0,400.5 L1005.2,385.5 L1005.5,364.2 L1005.8,400.5 L1006.0,400.5 L1006.2,389.5 L1006.5,384.2 L1006.8,400.5 L1007.0,400.5 L1007.2,370.4 L1007.5,381.7 L1007.8,400.5 L1008.0,400.5 L1008.2,377.6 L1008.5,369.6 L1008.8,400.5 L1009.0,400.5 L1009.2,388.9 L1009.5,380.7 L1009.8,400.5 L1010.0,400.5 L1010.2,378.3 L1010.5,374.8 L1010.8,400.5 L1011.0,400.5 L1011.2,372.4 L1011.5,372.2 L1011.8,400.5 L1012.0,383.5 L1012.2,374.8" fill="none" stroke="#c03242" stroke-width="0.9" stroke-opacity="0.9" clip-path="url(#highc)"/>
<line x1="862.0" y1="339.3" x2="862.0" y2="369.0" stroke="#b83040" stroke-width="1.3"/>
<line x1="888.4" y1="350.6" x2="888.4" y2="369.0" stroke="#b83040" stroke-width="1.3"/>
<path d="M815.5,317.8 L816.3,174.5 L816.4,51.6 L817.2,51.6 L817.3,174.5 L818.1,317.8 Z" fill="#a03444"/>
<text x="559.6" y="55.40" text-anchor="end" font-family="Liberation Sans" font-size="11.6" fill="#505050" stroke="#505050" stroke-width="0.15">0</text>
<text x="559.6" y="75.88" text-anchor="end" font-family="Liberation Sans" font-size="11.6" fill="#505050" stroke="#505050" stroke-width="0.15">-10</text>
<text x="559.6" y="96.36" text-anchor="end" font-family="Liberation Sans" font-size="11.6" fill="#505050" stroke="#505050" stroke-width="0.15">-20</text>
<text x="559.6" y="116.84" text-anchor="end" font-family="Liberation Sans" font-size="11.6" fill="#505050" stroke="#505050" stroke-width="0.15">-30</text>
<text x="559.6" y="137.32" text-anchor="end" font-family="Liberation Sans" font-size="11.6" fill="#505050" stroke="#505050" stroke-width="0.15">-40</text>
<text x="559.6" y="157.80" text-anchor="end" font-family="Liberation Sans" font-size="11.6" fill="#505050" stroke="#505050" stroke-width="0.15">-50</text>
<text x="559.6" y="178.28" text-anchor="end" font-family="Liberation Sans" font-size="11.6" fill="#505050" stroke="#505050" stroke-width="0.15">-60</text>
<text x="559.6" y="198.76" text-anchor="end" font-family="Liberation Sans" font-size="11.6" fill="#505050" stroke="#505050" stroke-width="0.15">-70</text>
<text x="559.6" y="219.24" text-anchor="end" font-family="Liberation Sans" font-size="11.6" fill="#505050" stroke="#505050" stroke-width="0.15">-80</text>
<text x="559.6" y="239.72" text-anchor="end" font-family="Liberation Sans" font-size="11.6" fill="#505050" stroke="#505050" stroke-width="0.15">-90</text>
<text x="559.6" y="260.20" text-anchor="end" font-family="Liberation Sans" font-size="11.6" fill="#505050" stroke="#505050" stroke-width="0.15">-100</text>
<text x="559.6" y="280.68" text-anchor="end" font-family="Liberation Sans" font-size="11.6" fill="#505050" stroke="#505050" stroke-width="0.15">-110</text>
<text x="559.6" y="301.16" text-anchor="end" font-family="Liberation Sans" font-size="11.6" fill="#505050" stroke="#505050" stroke-width="0.15">-120</text>
<text x="559.6" y="321.64" text-anchor="end" font-family="Liberation Sans" font-size="11.6" fill="#505050" stroke="#505050" stroke-width="0.15">-130</text>
<text x="559.6" y="342.12" text-anchor="end" font-family="Liberation Sans" font-size="11.6" fill="#505050" stroke="#505050" stroke-width="0.15">-140</text>
<text x="559.6" y="362.60" text-anchor="end" font-family="Liberation Sans" font-size="11.6" fill="#505050" stroke="#505050" stroke-width="0.15">-150</text>
<text x="559.6" y="383.08" text-anchor="end" font-family="Liberation Sans" font-size="11.6" fill="#505050" stroke="#505050" stroke-width="0.15">-160</text>
<text x="559.6" y="403.56" text-anchor="end" font-family="Liberation Sans" font-size="11.6" fill="#505050" stroke="#505050" stroke-width="0.15">-170</text>
<text x="562.00" y="413" text-anchor="middle" font-family="Liberation Sans" font-size="11.6" fill="#505050" stroke="#505050" stroke-width="0.15">20</text>
<text x="588.41" y="413" text-anchor="middle" font-family="Liberation Sans" font-size="11.6" fill="#505050" stroke="#505050" stroke-width="0.15">30</text>
<text x="621.69" y="413" text-anchor="middle" font-family="Liberation Sans" font-size="11.6" fill="#505050" stroke="#505050" stroke-width="0.15">50</text>
<text x="666.85" y="413" text-anchor="middle" font-family="Liberation Sans" font-size="11.6" fill="#505050" stroke="#505050" stroke-width="0.15">100</text>
<text x="712.00" y="413" text-anchor="middle" font-family="Liberation Sans" font-size="11.6" fill="#505050" stroke="#505050" stroke-width="0.15">200</text>
<text x="738.41" y="413" text-anchor="middle" font-family="Liberation Sans" font-size="11.6" fill="#505050" stroke="#505050" stroke-width="0.15">300</text>
<text x="771.69" y="413" text-anchor="middle" font-family="Liberation Sans" font-size="11.6" fill="#505050" stroke="#505050" stroke-width="0.15">500</text>
<text x="816.85" y="413" text-anchor="middle" font-family="Liberation Sans" font-size="11.6" fill="#505050" stroke="#505050" stroke-width="0.15">1k</text>
<text x="862.00" y="413" text-anchor="middle" font-family="Liberation Sans" font-size="11.6" fill="#505050" stroke="#505050" stroke-width="0.15">2k</text>
<text x="888.41" y="413" text-anchor="middle" font-family="Liberation Sans" font-size="11.6" fill="#505050" stroke="#505050" stroke-width="0.15">3k</text>
<text x="921.69" y="413" text-anchor="middle" font-family="Liberation Sans" font-size="11.6" fill="#505050" stroke="#505050" stroke-width="0.15">5k</text>
<text x="966.85" y="413" text-anchor="middle" font-family="Liberation Sans" font-size="11.6" fill="#505050" stroke="#505050" stroke-width="0.15">10k</text>
<text x="1012.00" y="413" text-anchor="middle" font-family="Liberation Sans" font-size="11.6" fill="#505050" stroke="#505050" stroke-width="0.15">20k</text>
<text x="786" y="423" text-anchor="middle" font-family="Liberation Sans" font-size="10" fill="#444" stroke="#444" stroke-width="0.2">Frequency (Hz)</text>
<text transform="translate(534,219.5) rotate(-90)" text-anchor="middle" font-family="Liberation Sans" font-size="10" fill="#444" stroke="#444" stroke-width="0.2">Level (dBrA)</text>
<text x="779" y="36.4" textLength="15" lengthAdjust="spacingAndGlyphs" font-family="Liberation Mono" font-weight="bold" font-size="10.5" fill="#3a3a3a">FFT</text>
</svg>
<div style="position:absolute;left:0;top:427px;width:1024px;height:3px;background:linear-gradient(#dde1e1,#7a8b92)"></div>
<div style="position:absolute;left:0px;top:430px;width:1024px;height:6px;background:#457a89;"></div>
<div style="position:absolute;left:513px;top:432.5px;width:2px;height:2px;background:#a9c4cc;"></div>
<div style="position:absolute;left:518px;top:432.5px;width:2px;height:2px;background:#a9c4cc;"></div>
<div style="position:absolute;left:523px;top:432.5px;width:2px;height:2px;background:#a9c4cc;"></div>
<div style="position:absolute;left:0px;top:427px;width:2px;height:6.5px;background:#0e1a1e;"></div>
<div style="position:absolute;left:0px;top:436px;width:1024px;height:22px;background:#dedddc;"></div>
<div style="position:absolute;left:0px;top:436px;width:1024px;height:2px;background:#e8ecec;"></div>
<div style="position:absolute;left:1019px;top:449.5px;width:5px;height:1.5px;background:#334;"></div>
<div style="position:absolute;left:1022px;top:444px;width:2px;height:2px;background:#556;"></div>
<div style="position:absolute;left:0px;top:458px;width:1024px;height:1.5px;background:#a6a6a6;"></div>
<div style="position:absolute;left:0px;top:436px;width:2px;height:23px;background:#b0b0b0;"></div>
<svg style="position:absolute;left:3.5px;top:440px" width="13" height="13" viewBox="0 0 13 13"><rect width="13" height="13" fill="#21343f"/><path d="M6.5 2 V11 M2 6.5 H11" stroke="#fff" stroke-width="2.4"/></svg>
<div style="position:absolute;left:20px;top:441px;font:normal 11px 'Liberation Sans', sans-serif;color:#3a3a3a;white-space:pre;line-height:1;-webkit-text-stroke:0.3px #3a3a3a;">Add Meter</div>
<svg style="position:absolute;left:79.5px;top:446.5px" width="5" height="3.5" viewBox="0 0 5 3.5"><path d="M0 0.3 H5 L2.5 3.2 Z" fill="#333"/></svg>
<svg style="position:absolute;left:94px;top:440px" width="14" height="14" viewBox="0 0 14 14"><rect width="14" height="14" fill="#2a3b46"/><rect x="1.6" y="1.6" width="7.4" height="10.8" fill="#e6ecf0"/><path d="M1.6 5.4 H9 M1.6 9 H9" stroke="#7f8f99" stroke-width="1"/><path d="M8 7.3 H10.5" stroke="#fff" stroke-width="2.2"/><path d="M10 4.3 L13 7.3 L10 10.3 Z" fill="#fff"/></svg>
<div style="position:absolute;left:110px;top:441px;font:normal 11px 'Liberation Sans', sans-serif;color:#3a3a3a;white-space:pre;line-height:1;-webkit-text-stroke:0.3px #3a3a3a;">Save Meter Data</div>
<svg style="position:absolute;left:206px;top:440px" width="14" height="13" viewBox="0 0 14 13"><rect width="14" height="13" fill="#21343f"/><path d="M4.5 2.5 L10.5 6.5 L4.5 10.5 Z" fill="#fff"/></svg>
<div style="position:absolute;left:223px;top:441px;font:normal 11px 'Liberation Sans', sans-serif;color:#3a3a3a;white-space:pre;line-height:1;-webkit-text-stroke:0.3px #3a3a3a;">Regulate</div>
<div style="position:absolute;left:4px;top:459.3px;width:502px;height:136.6px;background:#dde4e8;"></div>
<div style="position:absolute;left:4px;top:459.3px;width:502px;height:23px;background:#dfe6ea;"></div>
<div style="position:absolute;left:4px;top:482.3px;width:502px;height:1px;background:#c9d0d4;"></div>
<div style="position:absolute;left:7.5px;top:464.8px;font:bold 14px 'Liberation Sans', sans-serif;color:#111;white-space:pre;line-height:1;transform:scaleX(0.96);transform-origin:left top;">RMS Level</div>
<div style="position:absolute;left:80px;top:460.3px;width:65px;height:22px;background:#fff;"></div>
<div style="position:absolute;left:84px;top:465.8px;font:bold 11px 'Liberation Sans', sans-serif;color:#3c3c3c;white-space:pre;line-height:1;transform:scaleX(0.95);transform-origin:left top;">Vrms</div>
<svg style="position:absolute;left:138px;top:469.8px" width="5" height="3.5" viewBox="0 0 5 3.5"><path d="M0 0.3 H5 L2.5 3.2 Z" fill="#222"/></svg>
<svg style="position:absolute;left:147px;top:464.3px" width="14" height="14" viewBox="0 0 14 14"><rect width="14" height="14" fill="#2c3f4c"/><rect x="2" y="3" width="10" height="1.6" fill="#fff"/><rect x="2" y="9.6" width="10" height="1.6" fill="#fff"/><rect x="2" y="4.6" width="10" height="5" fill="#6c8394"/><path d="M2 9 L5 5.5 L7 8.5 L9.5 5.2 L12 8" stroke="#c8d4dc" stroke-width="1" fill="none"/></svg>
<svg style="position:absolute;left:163px;top:470.3px" width="5" height="3.5" viewBox="0 0 5 3.5"><path d="M0 0.3 H5 L2.5 3.2 Z" fill="#333"/></svg>
<svg style="position:absolute;left:173px;top:464.3px" width="14" height="14" viewBox="0 0 14 14"><rect x="0" y="0" width="14" height="14" fill="#273b44"/><polygon points="12.00,7.00 10.79,8.57 10.54,10.54 8.57,10.79 7.00,12.00 5.43,10.79 3.46,10.54 3.21,8.57 2.00,7.00 3.21,5.43 3.46,3.46 5.43,3.21 7.00,2.00 8.57,3.21 10.54,3.46 10.79,5.43" fill="#fff"/><circle cx="7.0" cy="7.0" r="1.8" fill="#2c3f4c"/></svg>
<div style="position:absolute;left:464.5px;top:463.3px;width:1px;height:16px;background:#d2d8d6;"></div>
<svg style="position:absolute;left:470px;top:465.3px" width="11" height="11" viewBox="0 0 11 11"><path d="M1 1.5 H4 M1 1 V10 H10 V6.5" stroke="#2d4563" stroke-width="2" fill="none"/><path d="M4 7 L8.5 2.5" stroke="#2d4563" stroke-width="1.8"/><path d="M5.5 0.5 H10.5 V5.5 Z" fill="#2d4563"/></svg>
<svg style="position:absolute;left:490px;top:465.8px" width="10" height="10" viewBox="0 0 10 10"><path d="M1 1 L9 9 M9 1 L1 9" stroke="#253640" stroke-width="1.7"/></svg>
<div style="position:absolute;left:11.2px;top:499.0px;font:normal 28px 'Liberation Sans', sans-serif;color:#424242;white-space:pre;line-height:1;transform:scaleX(0.865);transform-origin:left top;">Ch1</div>
<div style="position:absolute;left:11.2px;top:554.1px;font:normal 28px 'Liberation Sans', sans-serif;color:#424242;white-space:pre;line-height:1;transform:scaleX(0.865);transform-origin:left top;">Ch2</div>
<div style="position:absolute;left:4px;top:538.3px;width:128px;height:1.2px;background:#b9c0c3;"></div>
<svg style="position:absolute;left:121.5px;top:508.3px" width="9" height="8" viewBox="0 0 9 8"><path d="M0 0 H9 L4.5 8 Z" fill="#111"/></svg>
<svg style="position:absolute;left:121.5px;top:562.3px" width="9" height="8" viewBox="0 0 9 8"><path d="M0 0 H9 L4.5 8 Z" fill="#111"/></svg>
<div style="position:absolute;left:132.6px;top:486.3px;width:365.79999999999995px;height:105.3px;background:#000;"></div>
<div style="position:absolute;left:132.6px;top:521.3px;width:365.79999999999995px;height:15px;background:#8c8c8c;"></div>
<div style="position:absolute;left:132.6px;top:521.3px;width:365.79999999999995px;height:1.5px;background:#a4a4a4;"></div>
<div style="position:absolute;left:132.6px;top:534.8px;width:365.79999999999995px;height:1.5px;background:#9c9c9c;"></div>
<div style="position:absolute;left:132.6px;top:521.3px;width:288.9px;height:15px;background:#14f014;"></div>
<div style="position:absolute;left:132.6px;top:521.3px;width:288.9px;height:1.2px;background:#6ee86e;"></div>
<div style="position:absolute;left:132.6px;top:535.0999999999999px;width:288.9px;height:1.2px;background:#6ee06e;"></div>
<div style="position:absolute;left:132.6px;top:527.5px;width:305.0px;height:2.7px;background:#000;"></div>
<div style="position:absolute;left:132.6px;top:540.6px;width:365.79999999999995px;height:15px;background:#8c8c8c;"></div>
<div style="position:absolute;left:132.6px;top:540.6px;width:365.79999999999995px;height:1.5px;background:#a4a4a4;"></div>
<div style="position:absolute;left:132.6px;top:554.1px;width:365.79999999999995px;height:1.5px;background:#9c9c9c;"></div>
<div style="position:absolute;left:132.6px;top:540.6px;width:288.9px;height:15px;background:#14f014;"></div>
<div style="position:absolute;left:132.6px;top:540.6px;width:288.9px;height:1.2px;background:#6ee86e;"></div>
<div style="position:absolute;left:132.6px;top:554.4px;width:288.9px;height:1.2px;background:#6ee06e;"></div>
<div style="position:absolute;left:132.6px;top:546.8000000000001px;width:305.0px;height:2.7px;background:#000;"></div>
<div style="position:absolute;left:132.6px;top:536.3px;width:365.79999999999995px;height:1.8px;background:#6a6a6a;"></div>
<div style="position:absolute;left:132.6px;top:538.1px;width:365.79999999999995px;height:2.5px;background:#cfcfcf;"></div>
<div style="position:absolute;right:624.2px;top:490.1px;font:normal 29.5px 'Liberation Sans', sans-serif;color:#36e036;white-space:pre;line-height:1;transform:scaleX(0.892);transform-origin:right top;">10.56</div>
<div style="position:absolute;right:529.5px;top:490.1px;font:normal 29.5px 'Liberation Sans', sans-serif;color:#36e036;white-space:pre;line-height:1;transform:scaleX(0.947);transform-origin:right top;">Vrms</div>
<div style="position:absolute;right:624.2px;top:558.7px;font:normal 29.5px 'Liberation Sans', sans-serif;color:#36e036;white-space:pre;line-height:1;transform:scaleX(0.892);transform-origin:right top;">10.56</div>
<div style="position:absolute;right:529.5px;top:558.7px;font:normal 29.5px 'Liberation Sans', sans-serif;color:#36e036;white-space:pre;line-height:1;transform:scaleX(0.947);transform-origin:right top;">Vrms</div>
<div style="position:absolute;left:511px;top:459.3px;width:502px;height:136.6px;background:#dde4e8;"></div>
<div style="position:absolute;left:511px;top:459.3px;width:502px;height:23px;background:#dfe6ea;"></div>
<div style="position:absolute;left:511px;top:482.3px;width:502px;height:1px;background:#c9d0d4;"></div>
<div style="position:absolute;left:514.5px;top:464.8px;font:bold 14px 'Liberation Sans', sans-serif;color:#111;white-space:pre;line-height:1;transform:scaleX(1.02);transform-origin:left top;">THD+N Ratio</div>
<div style="position:absolute;left:607.5px;top:460.3px;width:65px;height:22px;background:#fff;"></div>
<div style="position:absolute;left:611.5px;top:465.8px;font:bold 11px 'Liberation Sans', sans-serif;color:#3c3c3c;white-space:pre;line-height:1;transform:scaleX(0.95);transform-origin:left top;">%</div>
<svg style="position:absolute;left:665.5px;top:469.8px" width="5" height="3.5" viewBox="0 0 5 3.5"><path d="M0 0.3 H5 L2.5 3.2 Z" fill="#222"/></svg>
<svg style="position:absolute;left:674.5px;top:464.3px" width="14" height="14" viewBox="0 0 14 14"><rect width="14" height="14" fill="#2c3f4c"/><rect x="2" y="3" width="10" height="1.6" fill="#fff"/><rect x="2" y="9.6" width="10" height="1.6" fill="#fff"/><rect x="2" y="4.6" width="10" height="5" fill="#6c8394"/><path d="M2 9 L5 5.5 L7 8.5 L9.5 5.2 L12 8" stroke="#c8d4dc" stroke-width="1" fill="none"/></svg>
<svg style="position:absolute;left:690.5px;top:470.3px" width="5" height="3.5" viewBox="0 0 5 3.5"><path d="M0 0.3 H5 L2.5 3.2 Z" fill="#333"/></svg>
<svg style="position:absolute;left:700.5px;top:464.3px" width="14" height="14" viewBox="0 0 14 14"><rect x="0" y="0" width="14" height="14" fill="#273b44"/><polygon points="12.00,7.00 10.79,8.57 10.54,10.54 8.57,10.79 7.00,12.00 5.43,10.79 3.46,10.54 3.21,8.57 2.00,7.00 3.21,5.43 3.46,3.46 5.43,3.21 7.00,2.00 8.57,3.21 10.54,3.46 10.79,5.43" fill="#fff"/><circle cx="7.0" cy="7.0" r="1.8" fill="#2c3f4c"/></svg>
<div style="position:absolute;left:971.5px;top:463.3px;width:1px;height:16px;background:#d2d8d6;"></div>
<svg style="position:absolute;left:977px;top:465.3px" width="11" height="11" viewBox="0 0 11 11"><path d="M1 1.5 H4 M1 1 V10 H10 V6.5" stroke="#2d4563" stroke-width="2" fill="none"/><path d="M4 7 L8.5 2.5" stroke="#2d4563" stroke-width="1.8"/><path d="M5.5 0.5 H10.5 V5.5 Z" fill="#2d4563"/></svg>
<svg style="position:absolute;left:997px;top:465.8px" width="10" height="10" viewBox="0 0 10 10"><path d="M1 1 L9 9 M9 1 L1 9" stroke="#253640" stroke-width="1.7"/></svg>
<div style="position:absolute;left:518.2px;top:499.0px;font:normal 28px 'Liberation Sans', sans-serif;color:#424242;white-space:pre;line-height:1;transform:scaleX(0.865);transform-origin:left top;">Ch1</div>
<div style="position:absolute;left:518.2px;top:554.1px;font:normal 28px 'Liberation Sans', sans-serif;color:#424242;white-space:pre;line-height:1;transform:scaleX(0.865);transform-origin:left top;">Ch2</div>
<div style="position:absolute;left:511px;top:538.3px;width:128px;height:1.2px;background:#b9c0c3;"></div>
<svg style="position:absolute;left:628.5px;top:508.3px" width="9" height="8" viewBox="0 0 9 8"><path d="M0 0 H9 L4.5 8 Z" fill="#111"/></svg>
<svg style="position:absolute;left:628.5px;top:562.3px" width="9" height="8" viewBox="0 0 9 8"><path d="M0 0 H9 L4.5 8 Z" fill="#111"/></svg>
<div style="position:absolute;left:639.6px;top:486.3px;width:365.79999999999995px;height:105.3px;background:#000;"></div>
<div style="position:absolute;left:639.6px;top:521.3px;width:365.79999999999995px;height:15px;background:#8c8c8c;"></div>
<div style="position:absolute;left:639.6px;top:521.3px;width:365.79999999999995px;height:1.5px;background:#a4a4a4;"></div>
<div style="position:absolute;left:639.6px;top:534.8px;width:365.79999999999995px;height:1.5px;background:#9c9c9c;"></div>
<div style="position:absolute;left:639.6px;top:527.5px;width:365.79999999999995px;height:2.7px;background:#000;"></div>
<div style="position:absolute;left:639.6px;top:540.6px;width:365.79999999999995px;height:15px;background:#8c8c8c;"></div>
<div style="position:absolute;left:639.6px;top:540.6px;width:365.79999999999995px;height:1.5px;background:#a4a4a4;"></div>
<div style="position:absolute;left:639.6px;top:554.1px;width:365.79999999999995px;height:1.5px;background:#9c9c9c;"></div>
<div style="position:absolute;left:639.6px;top:546.8000000000001px;width:365.79999999999995px;height:2.7px;background:#000;"></div>
<div style="position:absolute;left:639.6px;top:536.3px;width:365.79999999999995px;height:1.8px;background:#6a6a6a;"></div>
<div style="position:absolute;left:639.6px;top:538.1px;width:365.79999999999995px;height:2.5px;background:#cfcfcf;"></div>
<div style="position:absolute;right:63.200000000000045px;top:490.1px;font:normal 29.5px 'Liberation Sans', sans-serif;color:#36e036;white-space:pre;line-height:1;transform:scaleX(0.892);transform-origin:right top;">0.000049</div>
<div style="position:absolute;right:21.5px;top:490.1px;font:normal 29.5px 'Liberation Sans', sans-serif;color:#36e036;white-space:pre;line-height:1;transform:scaleX(0.947);transform-origin:right top;">%</div>
<div style="position:absolute;right:63.200000000000045px;top:558.7px;font:normal 29.5px 'Liberation Sans', sans-serif;color:#36e036;white-space:pre;line-height:1;transform:scaleX(0.892);transform-origin:right top;">0.000050</div>
<div style="position:absolute;right:21.5px;top:558.7px;font:normal 29.5px 'Liberation Sans', sans-serif;color:#36e036;white-space:pre;line-height:1;transform:scaleX(0.947);transform-origin:right top;">%</div>
<div style="position:absolute;left:4px;top:600.3px;width:502px;height:136.6px;background:#dde4e8;"></div>
<div style="position:absolute;left:4px;top:600.3px;width:502px;height:23px;background:#dfe6ea;"></div>
<div style="position:absolute;left:4px;top:623.3px;width:502px;height:1px;background:#c9d0d4;"></div>
<div style="position:absolute;left:6.9px;top:605.3px;font:bold 14px 'Liberation Sans', sans-serif;color:#111;white-space:pre;line-height:1;transform:scaleX(0.972);transform-origin:left top;">Frequency</div>
<div style="position:absolute;left:81px;top:601.3px;width:65px;height:22px;background:#fff;"></div>
<div style="position:absolute;left:85px;top:606.8px;font:bold 11px 'Liberation Sans', sans-serif;color:#3c3c3c;white-space:pre;line-height:1;transform:scaleX(0.95);transform-origin:left top;">Hz</div>
<svg style="position:absolute;left:139px;top:610.8px" width="5" height="3.5" viewBox="0 0 5 3.5"><path d="M0 0.3 H5 L2.5 3.2 Z" fill="#222"/></svg>
<svg style="position:absolute;left:148px;top:605.3px" width="14" height="14" viewBox="0 0 14 14"><rect width="14" height="14" fill="#2c3f4c"/><rect x="2" y="3" width="10" height="1.6" fill="#fff"/><rect x="2" y="9.6" width="10" height="1.6" fill="#fff"/><rect x="2" y="4.6" width="10" height="5" fill="#6c8394"/><path d="M2 9 L5 5.5 L7 8.5 L9.5 5.2 L12 8" stroke="#c8d4dc" stroke-width="1" fill="none"/></svg>
<svg style="position:absolute;left:164px;top:611.3px" width="5" height="3.5" viewBox="0 0 5 3.5"><path d="M0 0.3 H5 L2.5 3.2 Z" fill="#333"/></svg>
<svg style="position:absolute;left:174px;top:605.3px" width="14" height="14" viewBox="0 0 14 14"><rect x="0" y="0" width="14" height="14" fill="#273b44"/><polygon points="12.00,7.00 10.79,8.57 10.54,10.54 8.57,10.79 7.00,12.00 5.43,10.79 3.46,10.54 3.21,8.57 2.00,7.00 3.21,5.43 3.46,3.46 5.43,3.21 7.00,2.00 8.57,3.21 10.54,3.46 10.79,5.43" fill="#fff"/><circle cx="7.0" cy="7.0" r="1.8" fill="#2c3f4c"/></svg>
<div style="position:absolute;left:464.5px;top:604.3px;width:1px;height:16px;background:#d2d8d6;"></div>
<svg style="position:absolute;left:470px;top:606.3px" width="11" height="11" viewBox="0 0 11 11"><path d="M1 1.5 H4 M1 1 V10 H10 V6.5" stroke="#2d4563" stroke-width="2" fill="none"/><path d="M4 7 L8.5 2.5" stroke="#2d4563" stroke-width="1.8"/><path d="M5.5 0.5 H10.5 V5.5 Z" fill="#2d4563"/></svg>
<svg style="position:absolute;left:490px;top:606.8px" width="10" height="10" viewBox="0 0 10 10"><path d="M1 1 L9 9 M9 1 L1 9" stroke="#253640" stroke-width="1.7"/></svg>
<div style="position:absolute;left:11.2px;top:640.0px;font:normal 28px 'Liberation Sans', sans-serif;color:#424242;white-space:pre;line-height:1;transform:scaleX(0.865);transform-origin:left top;">Ch1</div>
<div style="position:absolute;left:11.2px;top:695.0999999999999px;font:normal 28px 'Liberation Sans', sans-serif;color:#424242;white-space:pre;line-height:1;transform:scaleX(0.865);transform-origin:left top;">Ch2</div>
<div style="position:absolute;left:4px;top:679.3px;width:128px;height:1.2px;background:#b9c0c3;"></div>
<svg style="position:absolute;left:121.5px;top:649.3px" width="9" height="8" viewBox="0 0 9 8"><path d="M0 0 H9 L4.5 8 Z" fill="#111"/></svg>
<svg style="position:absolute;left:121.5px;top:703.3px" width="9" height="8" viewBox="0 0 9 8"><path d="M0 0 H9 L4.5 8 Z" fill="#111"/></svg>
<div style="position:absolute;left:132.6px;top:627.3px;width:365.79999999999995px;height:105.3px;background:#000;"></div>
<div style="position:absolute;left:132.6px;top:662.3px;width:365.79999999999995px;height:15px;background:#8c8c8c;"></div>
<div style="position:absolute;left:132.6px;top:662.3px;width:365.79999999999995px;height:1.5px;background:#a4a4a4;"></div>
<div style="position:absolute;left:132.6px;top:675.8px;width:365.79999999999995px;height:1.5px;background:#9c9c9c;"></div>
<div style="position:absolute;left:132.6px;top:662.3px;width:207.9px;height:15px;background:#14f014;"></div>
<div style="position:absolute;left:132.6px;top:662.3px;width:207.9px;height:1.2px;background:#6ee86e;"></div>
<div style="position:absolute;left:132.6px;top:676.0999999999999px;width:207.9px;height:1.2px;background:#6ee06e;"></div>
<div style="position:absolute;left:132.6px;top:668.5px;width:365.79999999999995px;height:2.7px;background:#000;"></div>
<div style="position:absolute;left:132.6px;top:681.5999999999999px;width:365.79999999999995px;height:15px;background:#8c8c8c;"></div>
<div style="position:absolute;left:132.6px;top:681.5999999999999px;width:365.79999999999995px;height:1.5px;background:#a4a4a4;"></div>
<div style="position:absolute;left:132.6px;top:695.0999999999999px;width:365.79999999999995px;height:1.5px;background:#9c9c9c;"></div>
<div style="position:absolute;left:132.6px;top:681.5999999999999px;width:207.9px;height:15px;background:#14f014;"></div>
<div style="position:absolute;left:132.6px;top:681.5999999999999px;width:207.9px;height:1.2px;background:#6ee86e;"></div>
<div style="position:absolute;left:132.6px;top:695.3999999999999px;width:207.9px;height:1.2px;background:#6ee06e;"></div>
<div style="position:absolute;left:132.6px;top:687.8px;width:365.79999999999995px;height:2.7px;background:#000;"></div>
<div style="position:absolute;left:132.6px;top:677.3px;width:365.79999999999995px;height:1.8px;background:#6a6a6a;"></div>
<div style="position:absolute;left:132.6px;top:679.0999999999999px;width:365.79999999999995px;height:2.5px;background:#cfcfcf;"></div>
<div style="position:absolute;right:601.2px;top:631.0999999999999px;font:normal 29.5px 'Liberation Sans', sans-serif;color:#36e036;white-space:pre;line-height:1;transform:scaleX(0.892);transform-origin:right top;">1.00012</div>
<div style="position:absolute;right:528.5px;top:631.0999999999999px;font:normal 29.5px 'Liberation Sans', sans-serif;color:#36e036;white-space:pre;line-height:1;transform:scaleX(0.947);transform-origin:right top;">kHz</div>
<div style="position:absolute;right:601.2px;top:699.6999999999999px;font:normal 29.5px 'Liberation Sans', sans-serif;color:#36e036;white-space:pre;line-height:1;transform:scaleX(0.892);transform-origin:right top;">1.00012</div>
<div style="position:absolute;right:528.5px;top:699.6999999999999px;font:normal 29.5px 'Liberation Sans', sans-serif;color:#36e036;white-space:pre;line-height:1;transform:scaleX(0.947);transform-origin:right top;">kHz</div>
<div style="position:absolute;left:511px;top:600.3px;width:502px;height:136.6px;background:#dde4e8;"></div>
<div style="position:absolute;left:511px;top:600.3px;width:502px;height:23px;background:#dfe6ea;"></div>
<div style="position:absolute;left:511px;top:623.3px;width:502px;height:1px;background:#c9d0d4;"></div>
<div style="position:absolute;left:514.0px;top:605.3px;font:bold 14px 'Liberation Sans', sans-serif;color:#111;white-space:pre;line-height:1;transform:scaleX(1.02);transform-origin:left top;">SINAD</div>
<div style="position:absolute;left:563.5px;top:601.3px;width:65px;height:22px;background:#fff;"></div>
<div style="position:absolute;left:567.5px;top:606.8px;font:bold 11px 'Liberation Sans', sans-serif;color:#3c3c3c;white-space:pre;line-height:1;transform:scaleX(0.95);transform-origin:left top;">dB</div>
<svg style="position:absolute;left:621.5px;top:610.8px" width="5" height="3.5" viewBox="0 0 5 3.5"><path d="M0 0.3 H5 L2.5 3.2 Z" fill="#222"/></svg>
<svg style="position:absolute;left:630.5px;top:605.3px" width="14" height="14" viewBox="0 0 14 14"><rect width="14" height="14" fill="#2c3f4c"/><rect x="2" y="3" width="10" height="1.6" fill="#fff"/><rect x="2" y="9.6" width="10" height="1.6" fill="#fff"/><rect x="2" y="4.6" width="10" height="5" fill="#6c8394"/><path d="M2 9 L5 5.5 L7 8.5 L9.5 5.2 L12 8" stroke="#c8d4dc" stroke-width="1" fill="none"/></svg>
<svg style="position:absolute;left:646.5px;top:611.3px" width="5" height="3.5" viewBox="0 0 5 3.5"><path d="M0 0.3 H5 L2.5 3.2 Z" fill="#333"/></svg>
<svg style="position:absolute;left:656.5px;top:605.3px" width="14" height="14" viewBox="0 0 14 14"><rect x="0" y="0" width="14" height="14" fill="#273b44"/><polygon points="12.00,7.00 10.79,8.57 10.54,10.54 8.57,10.79 7.00,12.00 5.43,10.79 3.46,10.54 3.21,8.57 2.00,7.00 3.21,5.43 3.46,3.46 5.43,3.21 7.00,2.00 8.57,3.21 10.54,3.46 10.79,5.43" fill="#fff"/><circle cx="7.0" cy="7.0" r="1.8" fill="#2c3f4c"/></svg>
<div style="position:absolute;left:971.5px;top:604.3px;width:1px;height:16px;background:#d2d8d6;"></div>
<svg style="position:absolute;left:977px;top:606.3px" width="11" height="11" viewBox="0 0 11 11"><path d="M1 1.5 H4 M1 1 V10 H10 V6.5" stroke="#2d4563" stroke-width="2" fill="none"/><path d="M4 7 L8.5 2.5" stroke="#2d4563" stroke-width="1.8"/><path d="M5.5 0.5 H10.5 V5.5 Z" fill="#2d4563"/></svg>
<svg style="position:absolute;left:997px;top:606.8px" width="10" height="10" viewBox="0 0 10 10"><path d="M1 1 L9 9 M9 1 L1 9" stroke="#253640" stroke-width="1.7"/></svg>
<div style="position:absolute;left:518.2px;top:640.0px;font:normal 28px 'Liberation Sans', sans-serif;color:#424242;white-space:pre;line-height:1;transform:scaleX(0.865);transform-origin:left top;">Ch1</div>
<div style="position:absolute;left:518.2px;top:695.0999999999999px;font:normal 28px 'Liberation Sans', sans-serif;color:#424242;white-space:pre;line-height:1;transform:scaleX(0.865);transform-origin:left top;">Ch2</div>
<div style="position:absolute;left:511px;top:679.3px;width:128px;height:1.2px;background:#b9c0c3;"></div>
<svg style="position:absolute;left:628.5px;top:649.3px" width="9" height="8" viewBox="0 0 9 8"><path d="M0 0 H9 L4.5 8 Z" fill="#111"/></svg>
<svg style="position:absolute;left:628.5px;top:703.3px" width="9" height="8" viewBox="0 0 9 8"><path d="M0 0 H9 L4.5 8 Z" fill="#111"/></svg>
<div style="position:absolute;left:639.6px;top:627.3px;width:365.79999999999995px;height:105.3px;background:#000;"></div>
<div style="position:absolute;left:639.6px;top:662.3px;width:365.79999999999995px;height:15px;background:#8c8c8c;"></div>
<div style="position:absolute;left:639.6px;top:662.3px;width:365.79999999999995px;height:1.5px;background:#a4a4a4;"></div>
<div style="position:absolute;left:639.6px;top:675.8px;width:365.79999999999995px;height:1.5px;background:#9c9c9c;"></div>
<div style="position:absolute;left:639.6px;top:662.3px;width:366.4px;height:15px;background:#14f014;"></div>
<div style="position:absolute;left:639.6px;top:662.3px;width:366.4px;height:1.2px;background:#6ee86e;"></div>
<div style="position:absolute;left:639.6px;top:676.0999999999999px;width:366.4px;height:1.2px;background:#6ee06e;"></div>
<div style="position:absolute;left:639.6px;top:668.5px;width:365.79999999999995px;height:2.7px;background:#000;"></div>
<div style="position:absolute;left:639.6px;top:681.5999999999999px;width:365.79999999999995px;height:15px;background:#8c8c8c;"></div>
<div style="position:absolute;left:639.6px;top:681.5999999999999px;width:365.79999999999995px;height:1.5px;background:#a4a4a4;"></div>
<div style="position:absolute;left:639.6px;top:695.0999999999999px;width:365.79999999999995px;height:1.5px;background:#9c9c9c;"></div>
<div style="position:absolute;left:639.6px;top:681.5999999999999px;width:366.4px;height:15px;background:#14f014;"></div>
<div style="position:absolute;left:639.6px;top:681.5999999999999px;width:366.4px;height:1.2px;background:#6ee86e;"></div>
<div style="position:absolute;left:639.6px;top:695.3999999999999px;width:366.4px;height:1.2px;background:#6ee06e;"></div>
<div style="position:absolute;left:639.6px;top:687.8px;width:365.79999999999995px;height:2.7px;background:#000;"></div>
<div style="position:absolute;left:639.6px;top:677.3px;width:365.79999999999995px;height:1.8px;background:#6a6a6a;"></div>
<div style="position:absolute;left:639.6px;top:679.0999999999999px;width:365.79999999999995px;height:2.5px;background:#cfcfcf;"></div>
<div style="position:absolute;right:76.20000000000005px;top:631.0999999999999px;font:normal 29.5px 'Liberation Sans', sans-serif;color:#36e036;white-space:pre;line-height:1;transform:scaleX(0.892);transform-origin:right top;">126.122</div>
<div style="position:absolute;right:21.5px;top:631.0999999999999px;font:normal 29.5px 'Liberation Sans', sans-serif;color:#36e036;white-space:pre;line-height:1;transform:scaleX(0.947);transform-origin:right top;">dB</div>
<div style="position:absolute;right:76.20000000000005px;top:699.6999999999999px;font:normal 29.5px 'Liberation Sans', sans-serif;color:#36e036;white-space:pre;line-height:1;transform:scaleX(0.892);transform-origin:right top;">126.003</div>
<div style="position:absolute;right:21.5px;top:699.6999999999999px;font:normal 29.5px 'Liberation Sans', sans-serif;color:#36e036;white-space:pre;line-height:1;transform:scaleX(0.947);transform-origin:right top;">dB</div>
<div style="position:absolute;left:1013px;top:459px;width:9px;height:288px;background:#adadad;"></div>
<div style="position:absolute;left:1022px;top:459px;width:2px;height:288px;background:#e2e2e2;"></div>
<div style="position:absolute;left:5px;top:742.8px;width:500.6px;height:3.6px;border-radius:0 2px 2px 0;background:linear-gradient(#5a5a5a,#2e2e2e)"></div>
<div style="position:absolute;left:0px;top:746.4px;width:1024px;height:19.6px;background:#efefef;"></div>
<div style="position:absolute;left:0px;top:746.4px;width:1024px;height:1.2px;background:#d4d4d4;"></div>
<div style="position:absolute;left:630px;top:748px;width:40px;height:18px;background:#f4f4f4;"></div>
<div style="position:absolute;left:411.5px;top:751.6px;font:normal 11.5px 'Liberation Sans', sans-serif;color:#404040;white-space:pre;line-height:1;transform:scaleX(1.0);transform-origin:left top;-webkit-text-stroke:0.3px #404040;">Output:</div>
<div style="position:absolute;left:455.6px;top:749.3px;width:174px;height:14.7px;background:#000;"></div>
<div style="position:absolute;left:458px;top:751.4px;font:normal 11px 'Liberation Sans', sans-serif;color:#30a830;white-space:pre;line-height:1;transform:scaleX(1.022);transform-origin:left top;-webkit-text-stroke:0.3px #30a830;">Analog Unbalanced 2 Ch, 20 ohm</div>
<div style="position:absolute;left:635px;top:751.6px;font:normal 11.5px 'Liberation Sans', sans-serif;color:#404040;white-space:pre;line-height:1;transform:scaleX(1.1);transform-origin:left top;-webkit-text-stroke:0.3px #404040;">Input:</div>
<div style="position:absolute;left:670.3px;top:749.3px;width:172px;height:14.7px;background:#000;"></div>
<div style="position:absolute;left:673px;top:751.4px;font:normal 11px 'Liberation Sans', sans-serif;color:#30a830;white-space:pre;line-height:1;transform:scaleX(1.02);transform-origin:left top;-webkit-text-stroke:0.3px #30a830;">Analog Balanced 2 Ch, 200 kohm</div>
<div style="position:absolute;left:844.8px;top:749.3px;width:62.9px;height:14.7px;background:#000;"></div>
<div style="position:absolute;left:848.5px;top:751.4px;font:normal 11px 'Liberation Sans', sans-serif;color:#30a830;white-space:pre;line-height:1;-webkit-text-stroke:0.3px #30a830;">10.00 Vrms</div>
<div style="position:absolute;left:910.5px;top:749.3px;width:110.8px;height:14.7px;background:#000;"></div>
<div style="position:absolute;left:913px;top:751.4px;font:normal 11px 'Liberation Sans', sans-serif;color:#30a830;white-space:pre;line-height:1;-webkit-text-stroke:0.3px #30a830;">AC (&lt;10 Hz) - 20 kHz</div>
</div></body></html>
